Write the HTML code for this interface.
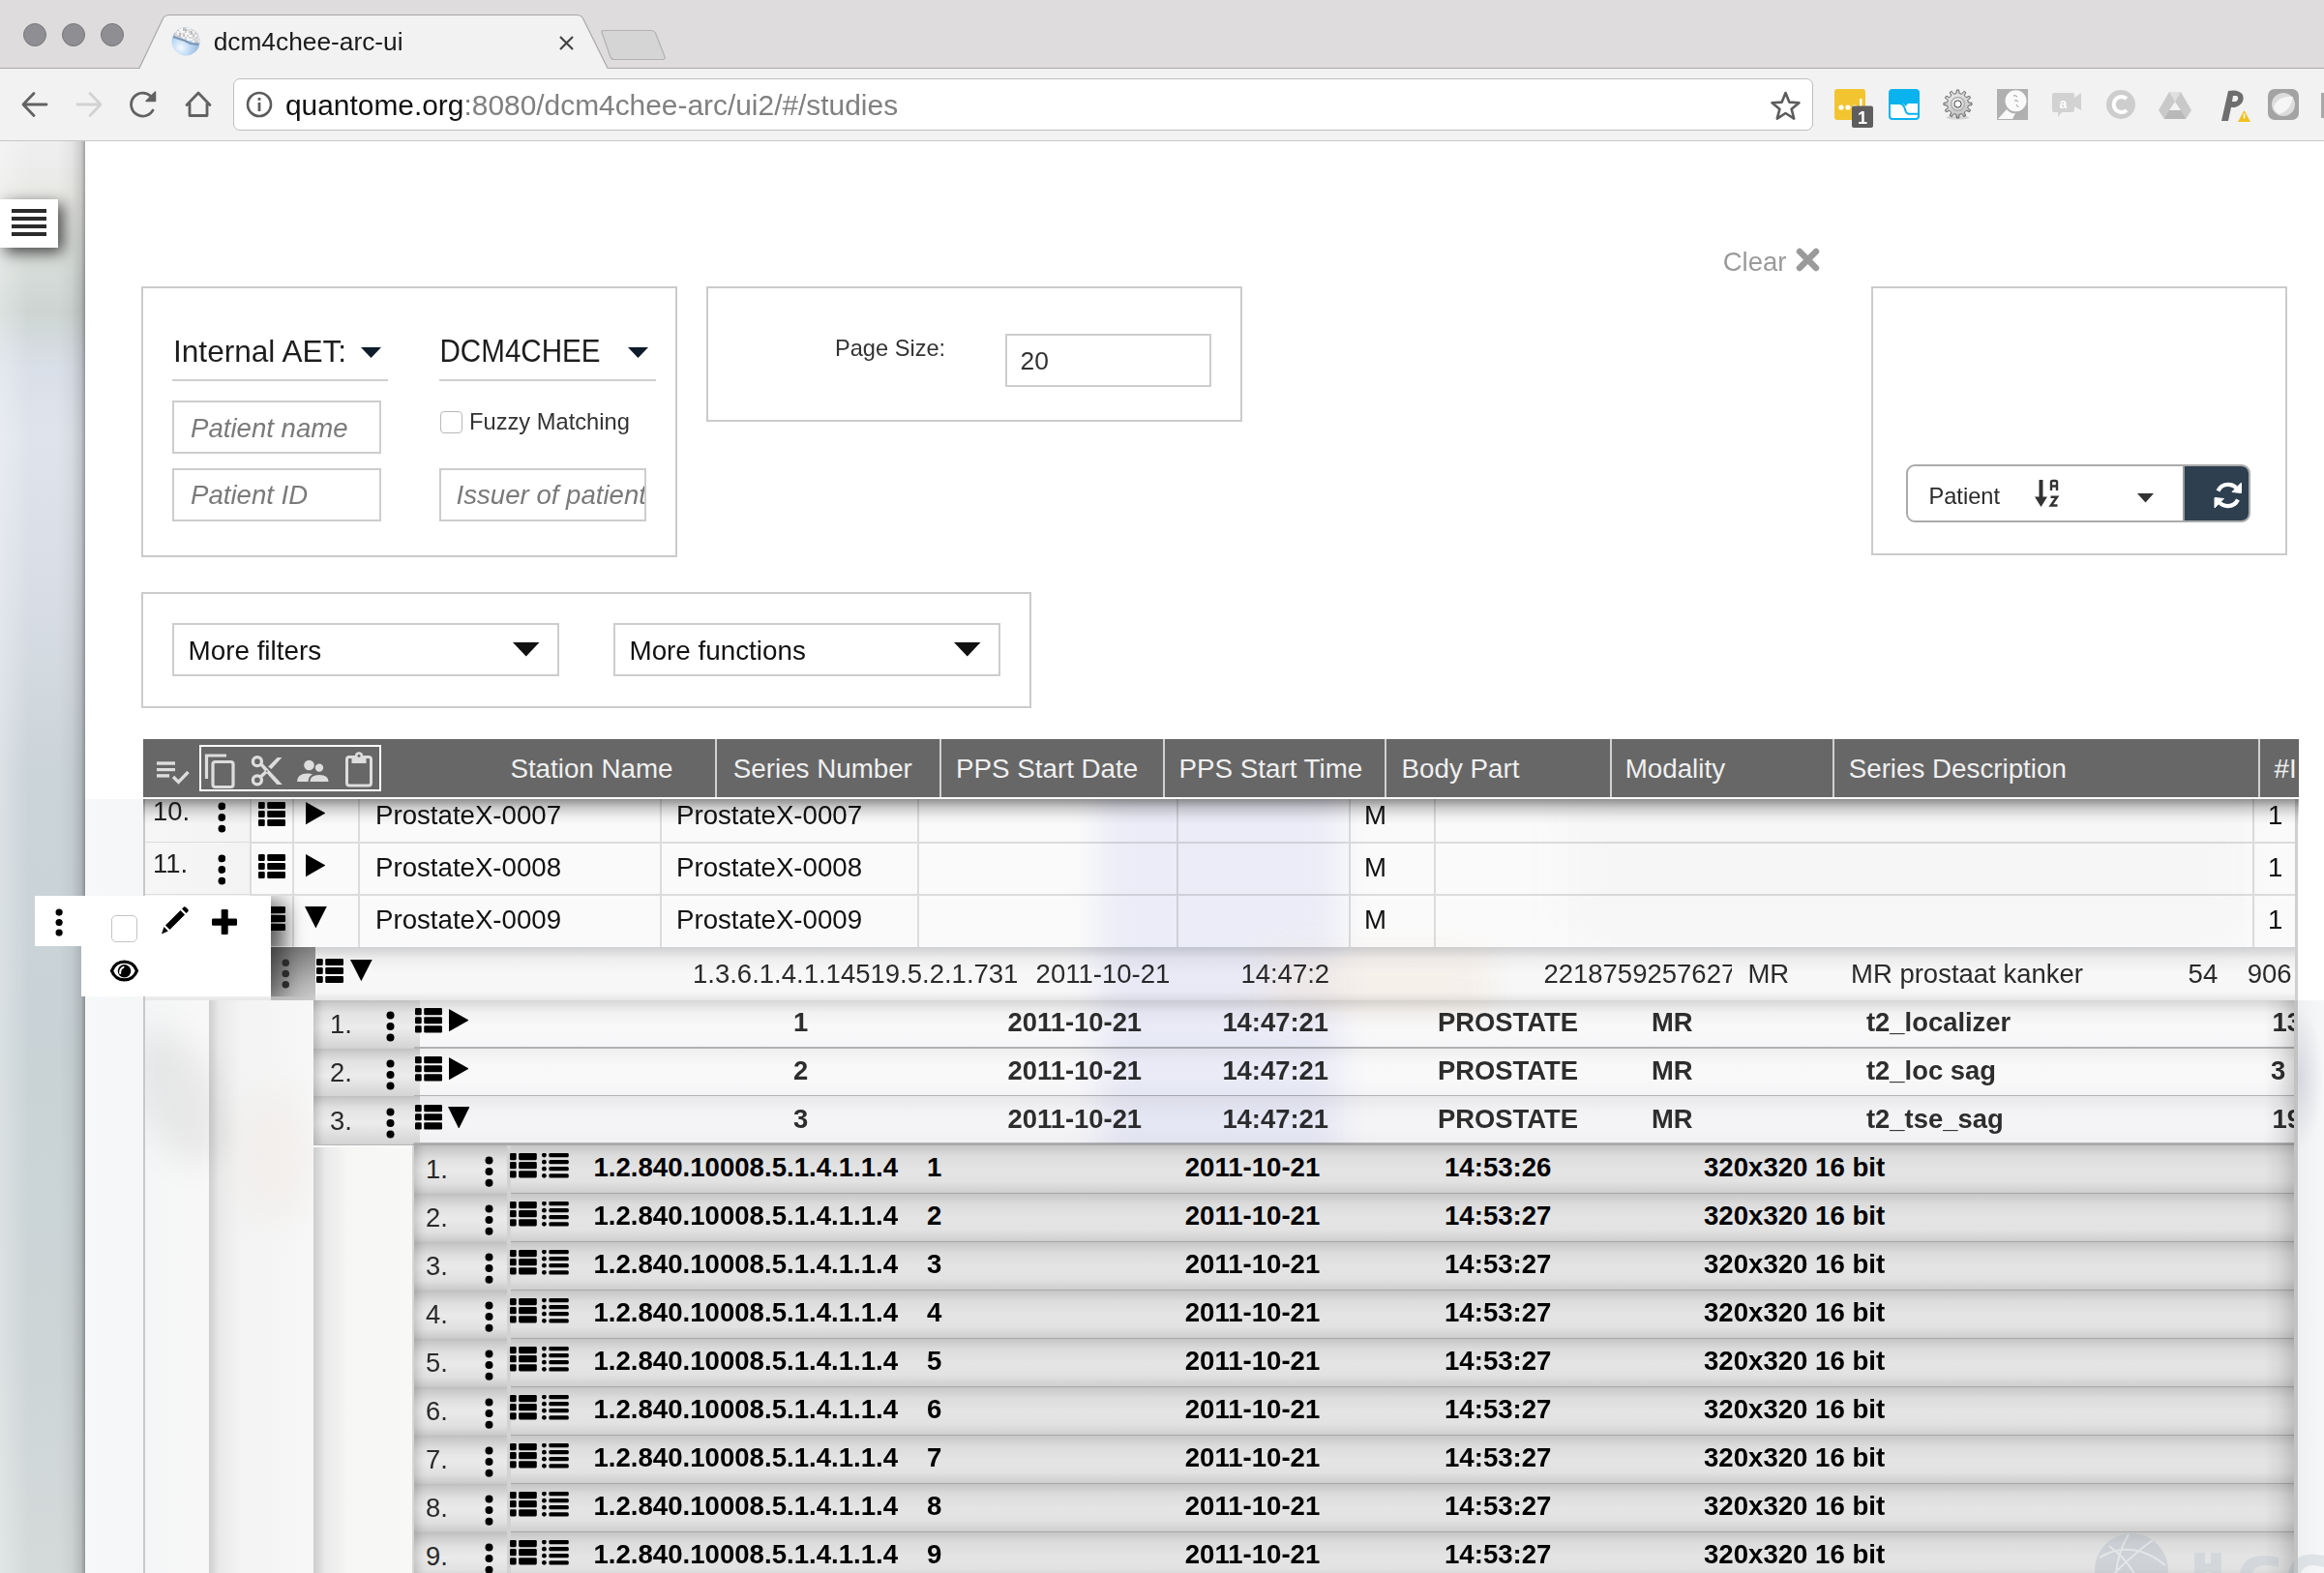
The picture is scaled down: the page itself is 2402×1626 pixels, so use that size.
<!DOCTYPE html>
<html><head><meta charset="utf-8"><title>dcm4chee-arc-ui</title>
<style>
html,body{margin:0;padding:0;width:2402px;height:1626px;overflow:hidden;background:#fff;font-family:"Liberation Sans", sans-serif;position:relative}
.t{position:absolute;white-space:pre;font-family:"Liberation Sans", sans-serif}
svg{display:block}
</style></head><body>
<div style="position:absolute;left:0px;top:0px;width:2402px;height:71px;background:#dedcdc"></div>
<div style="position:absolute;left:0px;top:70px;width:2402px;height:1px;background:#a9a9a9"></div>
<svg style="position:absolute;left:0px;top:0px;" width="700" height="72" viewBox="0 0 700 72"><path d="M143.5,71.5 L168.5,19 Q170.5,15.5 175,15.5 L596,15.5 Q600.5,15.5 602.5,19 L628.5,71.5" fill="#f2f2f2" stroke="#a9a9a9" stroke-width="1.2"/><path d="M622,33.5 Q621,31.5 624,31.5 L673,31.5 Q676,31.5 677.5,34 L687,58.5 Q688,61.5 685,61.5 L635,61.5 Q632,61.5 631,59 Z" fill="#d5d5d5" stroke="#b2b2b2" stroke-width="1.2"/></svg>
<svg style="position:absolute;left:0px;top:0px;" width="140" height="71" viewBox="0 0 140 71"><circle cx="36" cy="36" r="11.5" fill="#8f8e93" stroke="#77767a" stroke-width="1"/><circle cx="76" cy="36" r="11.5" fill="#8f8e93" stroke="#77767a" stroke-width="1"/><circle cx="116" cy="36" r="11.5" fill="#8f8e93" stroke="#77767a" stroke-width="1"/></svg>
<svg style="position:absolute;left:177px;top:28px;" width="30" height="30" viewBox="0 0 30 30"><defs><radialGradient id="fg" cx="0.33" cy="0.7" r="0.75"><stop offset="0" stop-color="#f4f9ff"/><stop offset="0.45" stop-color="#bcd8f4"/><stop offset="1" stop-color="#86a8cc"/></radialGradient><clipPath id="fc"><circle cx="15" cy="15" r="14.5"/></clipPath></defs><g clip-path="url(#fc)"><rect x="0" y="0" width="30" height="30" fill="url(#fg)"/><rect x="0" y="0" width="2" height="2" fill="#e2e2e2"/><rect x="2" y="0" width="2" height="2" fill="#f8f8f8"/><rect x="4" y="0" width="2" height="2" fill="#f8f8f8"/><rect x="6" y="0" width="2" height="2" fill="#e2e2e2"/><rect x="8" y="0" width="2" height="2" fill="#cfcfcf"/><rect x="10" y="0" width="2" height="2" fill="#f8f8f8"/><rect x="12" y="0" width="2" height="2" fill="#bdbdbd"/><rect x="14" y="0" width="2" height="2" fill="#d8d8d8"/><rect x="16" y="0" width="2" height="2" fill="#f8f8f8"/><rect x="18" y="0" width="2" height="2" fill="#f4f4f4"/><rect x="20" y="0" width="2" height="2" fill="#f8f8f8"/><rect x="22" y="0" width="2" height="2" fill="#f4f4f4"/><rect x="24" y="0" width="2" height="2" fill="#bdbdbd"/><rect x="26" y="0" width="2" height="2" fill="#cfcfcf"/><rect x="28" y="0" width="2" height="2" fill="#f8f8f8"/><rect x="0" y="2" width="2" height="2" fill="#e2e2e2"/><rect x="2" y="2" width="2" height="2" fill="#e2e2e2"/><rect x="4" y="2" width="2" height="2" fill="#d8d8d8"/><rect x="6" y="2" width="2" height="2" fill="#bdbdbd"/><rect x="8" y="2" width="2" height="2" fill="#f8f8f8"/><rect x="10" y="2" width="2" height="2" fill="#f8f8f8"/><rect x="12" y="2" width="2" height="2" fill="#bdbdbd"/><rect x="14" y="2" width="2" height="2" fill="#bdbdbd"/><rect x="16" y="2" width="2" height="2" fill="#d8d8d8"/><rect x="18" y="2" width="2" height="2" fill="#e2e2e2"/><rect x="20" y="2" width="2" height="2" fill="#e2e2e2"/><rect x="22" y="2" width="2" height="2" fill="#d8d8d8"/><rect x="24" y="2" width="2" height="2" fill="#e2e2e2"/><rect x="26" y="2" width="2" height="2" fill="#f8f8f8"/><rect x="28" y="2" width="2" height="2" fill="#bdbdbd"/><rect x="0" y="4" width="2" height="2" fill="#d8d8d8"/><rect x="2" y="4" width="2" height="2" fill="#f4f4f4"/><rect x="4" y="4" width="2" height="2" fill="#d8d8d8"/><rect x="6" y="4" width="2" height="2" fill="#f4f4f4"/><rect x="8" y="4" width="2" height="2" fill="#e2e2e2"/><rect x="10" y="4" width="2" height="2" fill="#f8f8f8"/><rect x="12" y="4" width="2" height="2" fill="#f4f4f4"/><rect x="14" y="4" width="2" height="2" fill="#cfcfcf"/><rect x="16" y="4" width="2" height="2" fill="#f4f4f4"/><rect x="18" y="4" width="2" height="2" fill="#cfcfcf"/><rect x="20" y="4" width="2" height="2" fill="#bdbdbd"/><rect x="22" y="4" width="2" height="2" fill="#f8f8f8"/><rect x="24" y="4" width="2" height="2" fill="#d8d8d8"/><rect x="26" y="4" width="2" height="2" fill="#bdbdbd"/><rect x="28" y="4" width="2" height="2" fill="#d8d8d8"/><rect x="0" y="6" width="2" height="2" fill="#bdbdbd"/><rect x="2" y="6" width="2" height="2" fill="#bdbdbd"/><rect x="4" y="6" width="2" height="2" fill="#d8d8d8"/><rect x="6" y="6" width="2" height="2" fill="#f8f8f8"/><rect x="8" y="6" width="2" height="2" fill="#bdbdbd"/><rect x="10" y="6" width="2" height="2" fill="#e2e2e2"/><rect x="12" y="6" width="2" height="2" fill="#cfcfcf"/><rect x="14" y="6" width="2" height="2" fill="#f4f4f4"/><rect x="16" y="6" width="2" height="2" fill="#f4f4f4"/><rect x="18" y="6" width="2" height="2" fill="#e2e2e2"/><rect x="20" y="6" width="2" height="2" fill="#bdbdbd"/><rect x="22" y="6" width="2" height="2" fill="#e2e2e2"/><rect x="24" y="6" width="2" height="2" fill="#cfcfcf"/><rect x="26" y="6" width="2" height="2" fill="#d8d8d8"/><rect x="28" y="6" width="2" height="2" fill="#bdbdbd"/><rect x="4" y="8" width="2" height="2" fill="#d8d8d8"/><rect x="6" y="8" width="2" height="2" fill="#cfcfcf"/><rect x="8" y="8" width="2" height="2" fill="#bdbdbd"/><rect x="10" y="8" width="2" height="2" fill="#f8f8f8"/><rect x="12" y="8" width="2" height="2" fill="#bdbdbd"/><rect x="14" y="8" width="2" height="2" fill="#f8f8f8"/><rect x="16" y="8" width="2" height="2" fill="#cfcfcf"/><rect x="18" y="8" width="2" height="2" fill="#f8f8f8"/><rect x="20" y="8" width="2" height="2" fill="#f8f8f8"/><rect x="22" y="8" width="2" height="2" fill="#bdbdbd"/><rect x="24" y="8" width="2" height="2" fill="#f8f8f8"/><rect x="26" y="8" width="2" height="2" fill="#e2e2e2"/><rect x="28" y="8" width="2" height="2" fill="#cfcfcf"/><rect x="10" y="10" width="2" height="2" fill="#d8d8d8"/><rect x="12" y="10" width="2" height="2" fill="#f4f4f4"/><rect x="14" y="10" width="2" height="2" fill="#cfcfcf"/><rect x="16" y="10" width="2" height="2" fill="#f8f8f8"/><rect x="18" y="10" width="2" height="2" fill="#d8d8d8"/><rect x="20" y="10" width="2" height="2" fill="#d8d8d8"/><rect x="22" y="10" width="2" height="2" fill="#e2e2e2"/><rect x="24" y="10" width="2" height="2" fill="#d8d8d8"/><rect x="26" y="10" width="2" height="2" fill="#cfcfcf"/><rect x="28" y="10" width="2" height="2" fill="#f8f8f8"/><rect x="16" y="12" width="2" height="2" fill="#f8f8f8"/><rect x="18" y="12" width="2" height="2" fill="#f8f8f8"/><rect x="20" y="12" width="2" height="2" fill="#f4f4f4"/><rect x="22" y="12" width="2" height="2" fill="#d8d8d8"/><rect x="24" y="12" width="2" height="2" fill="#d8d8d8"/><rect x="26" y="12" width="2" height="2" fill="#e2e2e2"/><rect x="28" y="12" width="2" height="2" fill="#d8d8d8"/><rect x="22" y="14" width="2" height="2" fill="#f8f8f8"/><rect x="24" y="14" width="2" height="2" fill="#cfcfcf"/><rect x="26" y="14" width="2" height="2" fill="#cfcfcf"/><rect x="28" y="14" width="2" height="2" fill="#f4f4f4"/><path d="M2,10 L8,12 L14,14 L20,17 L28,18" fill="none" stroke="#7d95b0" stroke-width="2"/></g></svg>
<div class="t" style="left:220.7px;top:30.0px;font-size:26.3px;line-height:26.3px;color:#1a1a1a;font-weight:400;font-style:normal;">dcm4chee-arc-ui</div>
<svg style="position:absolute;left:576px;top:36px;" width="20" height="18" viewBox="0 0 20 18"><path d="M3,2 L16,15 M16,2 L3,15" stroke="#444" stroke-width="2.2"/></svg>
<div style="position:absolute;left:0px;top:71px;width:2402px;height:74px;background:#f2f2f2"></div>
<div style="position:absolute;left:0px;top:145px;width:2402px;height:1px;background:#c6c6c6"></div>
<svg style="position:absolute;left:20px;top:91px;" width="34" height="32" viewBox="0 0 34 32"><path d="M28,17 L5,17 M15,5.5 L4,17 L15,28.5" fill="none" stroke="#626262" stroke-width="2.8" stroke-linecap="round" stroke-linejoin="round"/></svg>
<svg style="position:absolute;left:76px;top:91px;" width="34" height="32" viewBox="0 0 34 32"><path d="M4,17 L27,17 M17,5.5 L28,17 L17,28.5" fill="none" stroke="#d2d2d2" stroke-width="2.8" stroke-linecap="round" stroke-linejoin="round"/></svg>
<svg style="position:absolute;left:132px;top:91px;" width="36" height="34" viewBox="0 0 36 34"><path d="M26.5,22 A12,12 0 1 1 24,8.5" fill="none" stroke="#626262" stroke-width="2.8"/><path d="M19,13.5 L28.5,4 L28.5,13.5 Z" fill="#626262" stroke="#626262" stroke-width="1.5" stroke-linejoin="round"/></svg>
<svg style="position:absolute;left:188px;top:91px;" width="34" height="32" viewBox="0 0 34 32"><path d="M5,17.5 L17,5 L29,17.5 M8,16 L8,28.5 L26,28.5 L26,16" fill="none" stroke="#626262" stroke-width="2.8" stroke-linejoin="round" stroke-linecap="round"/></svg>
<div style="position:absolute;left:241px;top:81px;width:1633px;height:54px;background:#fff;border:1px solid #bdbdbd;border-radius:7px;box-sizing:border-box"></div>
<svg style="position:absolute;left:252px;top:92px;" width="32" height="32" viewBox="0 0 32 32"><circle cx="16" cy="16" r="12" fill="none" stroke="#5c5c5c" stroke-width="2.6"/><rect x="14.6" y="14" width="2.8" height="9" fill="#5c5c5c"/><rect x="14.6" y="9" width="2.8" height="2.8" fill="#5c5c5c"/></svg>
<div class="t" style="left:295.0px;top:93.7px;font-size:29.9px;line-height:29.9px;color:#222;font-weight:400;font-style:normal;"><span style="color:#111">quantome.org</span><span style="color:#808080">:8080/dcm4chee-arc/ui2/#/studies</span></div>
<svg style="position:absolute;left:1828px;top:92px;" width="36" height="34" viewBox="0 0 36 34"><path d="M17.5,4 L21.3,13.6 L31.5,14.2 L23.6,20.7 L26.2,30.6 L17.5,25 L8.8,30.6 L11.4,20.7 L3.5,14.2 L13.7,13.6 Z" fill="none" stroke="#5c5c5c" stroke-width="2.6" stroke-linejoin="round"/></svg>
<svg style="position:absolute;left:1894px;top:90px;" width="46" height="44" viewBox="0 0 46 44"><rect x="2" y="2" width="32" height="32" rx="3" fill="#f2c530"/><circle cx="9" cy="21" r="2.6" fill="#fff"/><circle cx="16" cy="21" r="2.6" fill="#fff"/><circle cx="23" cy="21" r="2.6" fill="#fff"/><rect x="28" y="12" width="2.5" height="10" fill="#fff"/><rect x="20" y="19.5" width="22" height="22.5" rx="2" fill="#5e5e5e"/><text x="31" y="38" font-family="Liberation Sans" font-weight="700" font-size="18" fill="#fff" text-anchor="middle">1</text></svg>
<svg style="position:absolute;left:1952px;top:92px;" width="32" height="32" viewBox="0 0 32 32"><rect x="1" y="1" width="30" height="30" rx="3" fill="#fff" stroke="#0ab2ee" stroke-width="2"/><path d="M1,4 Q1,1 4,1 L28,1 Q31,1 31,4 L31,15 L1,15 Z" fill="#0ab2ee"/><path d="M1,15 L11,15 Q15,15 16.5,19.5 L17.8,23.3 Q18.8,25.8 22,25.8 L31,25.8" fill="none" stroke="#0ab2ee" stroke-width="2"/><path d="M15,15 L20,15 Q18,17 18,18 Z" fill="#0ab2ee"/></svg>
<svg style="position:absolute;left:2008px;top:92px;" width="31" height="32" viewBox="0 0 31 32"><defs><radialGradient id="gg" cx="0.45" cy="0.35" r="0.7"><stop offset="0" stop-color="#f2f2f2"/><stop offset="0.7" stop-color="#c9c9c9"/><stop offset="1" stop-color="#9d9d9d"/></radialGradient></defs><ellipse cx="15.5" cy="29.5" rx="12" ry="2" fill="rgba(0,0,0,0.12)"/><path d="M13.86,4.62 L14.39,0.94 L16.61,0.94 L17.14,4.62 L19.52,5.26 L21.82,2.34 L23.74,3.45 L22.36,6.90 L24.10,8.64 L27.55,7.26 L28.66,9.18 L25.74,11.48 L26.38,13.86 L30.06,14.39 L30.06,16.61 L26.38,17.14 L25.74,19.52 L28.66,21.82 L27.55,23.74 L24.10,22.36 L22.36,24.10 L23.74,27.55 L21.82,28.66 L19.52,25.74 L17.14,26.38 L16.61,30.06 L14.39,30.06 L13.86,26.38 L11.48,25.74 L9.18,28.66 L7.26,27.55 L8.64,24.10 L6.90,22.36 L3.45,23.74 L2.34,21.82 L5.26,19.52 L4.62,17.14 L0.94,16.61 L0.94,14.39 L4.62,13.86 L5.26,11.48 L2.34,9.18 L3.45,7.26 L6.90,8.64 L8.64,6.90 L7.26,3.45 L9.18,2.34 L11.48,5.26 Z" fill="url(#gg)" stroke="#5a5a5a" stroke-width="0.9" stroke-linejoin="round"/><circle cx="15.5" cy="15.5" r="7" fill="none" stroke="#b0b0b0" stroke-width="1.5"/><circle cx="15.5" cy="15.5" r="3.6" fill="#fff" stroke="#444" stroke-width="1"/></svg>
<svg style="position:absolute;left:2064px;top:92px;" width="32" height="32" viewBox="0 0 32 32"><rect x="0" y="0" width="32" height="32" fill="#b0b0b0"/><circle cx="19.5" cy="12.2" r="11" fill="#fafafa"/><path d="M1,31 L10,21 Q14,26 19,25 L16,31 Z" fill="#fafafa"/><path d="M17,7 Q19,6 21,8 M18,12 Q20,11 22,13 M20,16 L22,19" stroke="#999" stroke-width="1" fill="none"/></svg>
<svg style="position:absolute;left:2118px;top:92px;" width="36" height="34" viewBox="0 0 36 34"><path d="M3,6 Q3,4 5,4 L24,4 Q26,4 26,6 L26,22 Q26,24 24,24 L13,24 L9,29 L9,24 L5,24 Q3,24 3,22 Z" fill="#d2d2d2"/><path d="M26,9 L33,4 L33,22 L26,18 Z" fill="#d2d2d2"/><text x="14.5" y="20" font-family="Liberation Sans" font-weight="700" font-size="14" fill="#fff" text-anchor="middle">a</text></svg>
<svg style="position:absolute;left:2175px;top:90px;" width="34" height="36" viewBox="0 0 34 36"><circle cx="17" cy="18" r="15" fill="#cdcdcd"/><path d="M23,12 A8,8 0 1 0 23,24" fill="none" stroke="#fff" stroke-width="4"/></svg>
<svg style="position:absolute;left:2230px;top:93px;" width="36" height="32" viewBox="0 0 36 32"><path d="M12,2 L24,2 L35,21 L29,30 L7,30 L1,21 Z" fill="#c9c9c9"/><path d="M12,2 L24,2 L18,12 Z" fill="#e0e0e0"/><path d="M18,12 L12,21 L24,21 Z" fill="#f2f2f2"/><path d="M7,30 L12,21 L24,21 L29,30 Z" fill="#b8b8b8"/></svg>
<svg style="position:absolute;left:2290px;top:90px;" width="36" height="38" viewBox="0 0 36 38"><path d="M6,35 L13,4 Q24,2 28,8 Q31,17 20,21 L16,21 L13,35 Z" fill="#6e6e6e"/><path d="M18,9 L22,9 Q25,12 21,15 L17,15 Z" fill="#f2f2f2"/><path d="M23,36 L29.5,24 L36,36 Z" fill="#f0c020"/><rect x="28.8" y="27.5" width="1.5" height="5" fill="#fff"/></svg>
<svg style="position:absolute;left:2342px;top:90px;" width="36" height="36" viewBox="0 0 36 36"><rect x="2" y="2" width="32" height="32" rx="7" fill="#a3a3a3"/><circle cx="18" cy="18" r="12" fill="#dcdcdc"/><path d="M8,20 Q14,8 28,10 Q26,24 14,28 Q9,26 8,20Z" fill="#f5f5f5"/></svg>
<svg style="position:absolute;left:2398px;top:90px;" width="6" height="36" viewBox="0 0 6 36"><rect x="1" y="6" width="5" height="26" fill="#a8a8a8"/></svg>
<div style="position:absolute;left:0px;top:146px;width:88px;height:1480px;background:linear-gradient(180deg,#efeff1 0%,#e9e9e6 3.6%,#d8ddda 8.4%,#cdd5d2 11.8%,#d9dfe8 15.8%,#dfe4ec 20.5%,#d9dee6 30.7%,#cbd4d9 44%,#c9d3d6 64%,#cdd5d6 85%,#d4dada 100%)"></div>
<div style="position:absolute;left:0px;top:146px;width:30px;height:1480px;background:linear-gradient(90deg,rgba(255,255,255,0.3),rgba(255,255,255,0))"></div>
<div style="position:absolute;left:60px;top:146px;width:28px;height:1480px;background:linear-gradient(90deg,rgba(0,0,0,0) 0%,rgba(0,0,0,0.04) 50%,rgba(0,0,0,0.14) 85%,rgba(0,0,0,0.32) 100%)"></div>
<div style="position:absolute;left:0px;top:206px;width:60px;height:50px;background:#fff;box-shadow:5px 5px 15px rgba(0,0,0,0.7)"></div>
<div style="position:absolute;left:12px;top:216px;width:36px;height:4px;background:#2b2b2b"></div>
<div style="position:absolute;left:12px;top:224px;width:36px;height:4px;background:#2b2b2b"></div>
<div style="position:absolute;left:12px;top:232px;width:36px;height:4px;background:#2b2b2b"></div>
<div style="position:absolute;left:12px;top:240px;width:36px;height:4px;background:#2b2b2b"></div>
<div style="position:absolute;left:146px;top:296px;width:554px;height:280px;border:2px solid #cbcbcb;box-sizing:border-box"></div>
<div style="position:absolute;left:730px;top:296px;width:554px;height:140px;border:2px solid #cbcbcb;box-sizing:border-box"></div>
<div style="position:absolute;left:1934px;top:296px;width:430px;height:278px;border:2px solid #cbcbcb;box-sizing:border-box"></div>
<div style="position:absolute;left:146px;top:612px;width:920px;height:120px;border:2px solid #cbcbcb;box-sizing:border-box"></div>
<div class="t" style="left:179.0px;top:347.8px;font-size:31.6px;line-height:31.6px;color:#1d1d1d;font-weight:400;font-style:normal;">Internal AET:</div>
<svg style="position:absolute;left:373px;top:359px;" width="22" height="12" viewBox="0 0 22 12"><path d="M0,0 L21,0 L10.5,11 Z" fill="#0d1b2a"/></svg>
<div style="position:absolute;left:178px;top:392px;width:223px;height:2px;background:#cfcfcf"></div>
<div class="t" style="left:454.5px;top:349.4px;font-size:29.6px;line-height:29.6px;color:#1d1d1d;font-weight:400;font-style:normal;transform:scaleY(1.1);transform-origin:0 84.6%">DCM4CHEE</div>
<svg style="position:absolute;left:649px;top:359px;" width="22" height="12" viewBox="0 0 22 12"><path d="M0,0 L21,0 L10.5,11 Z" fill="#0d1b2a"/></svg>
<div style="position:absolute;left:454px;top:392px;width:224px;height:2px;background:#cfcfcf"></div>
<div style="position:absolute;left:178px;top:414px;width:216px;height:55px;border:2px solid #cdcdcd;box-sizing:border-box"></div>
<div class="t" style="left:197.0px;top:428.6px;font-size:27.6px;line-height:27.6px;color:#7a7a7a;font-weight:400;font-style:italic;">Patient name</div>
<div style="position:absolute;left:178px;top:484px;width:216px;height:55px;border:2px solid #cdcdcd;box-sizing:border-box"></div>
<div class="t" style="left:197.0px;top:498.1px;font-size:27.6px;line-height:27.6px;color:#7a7a7a;font-weight:400;font-style:italic;">Patient ID</div>
<div style="position:absolute;left:454.5px;top:424.5px;width:23px;height:23px;border:1.5px solid #b9b9b9;border-radius:4px;box-sizing:border-box;background:#fff"></div>
<div class="t" style="left:485.0px;top:425.4px;font-size:23.7px;line-height:23.7px;color:#333;font-weight:400;font-style:normal;">Fuzzy Matching</div>
<div style="position:absolute;left:454px;top:484px;width:214px;height:55px;border:2px solid #cdcdcd;box-sizing:border-box;overflow:hidden"></div>
<div style="position:absolute;left:456px;top:486px;width:210px;height:51px;overflow:hidden">
<div class="t" style="left:15.6px;top:12.1px;font-size:27.6px;line-height:27.6px;color:#7a7a7a;font-weight:400;font-style:italic;">Issuer of patient ID</div>
</div>
<div class="t" style="left:863.0px;top:349.0px;font-size:23.6px;line-height:23.6px;color:#333;font-weight:400;font-style:normal;">Page Size:</div>
<div style="position:absolute;left:1039px;top:344.5px;width:213px;height:55px;border:2px solid #cdcdcd;box-sizing:border-box"></div>
<div class="t" style="left:1054.5px;top:359.7px;font-size:26.4px;line-height:26.4px;color:#333;font-weight:400;font-style:normal;">20</div>
<div class="t" style="left:1780.7px;top:257.4px;font-size:27.5px;line-height:27.5px;color:#9a9a9a;font-weight:400;font-style:normal;">Clear</div>
<svg style="position:absolute;left:1856px;top:256px;" width="26" height="25" viewBox="0 0 26 25"><path d="M4,4 L21,21 M21,4 L4,21" stroke="#9a9a9a" stroke-width="6.5" stroke-linecap="round"/></svg>
<div style="position:absolute;left:1970px;top:480px;width:356px;height:60px;border:2px solid #ababab;border-radius:9px;box-sizing:border-box;background:#fff"></div>
<div style="position:absolute;left:2256px;top:482px;width:68px;height:56px;background:#2e3f4f;border-radius:0 7px 7px 0;border-left:2px solid #9a9a9a;box-sizing:border-box"></div>
<div class="t" style="left:1993.5px;top:502.0px;font-size:23.6px;line-height:23.6px;color:#2a2a2a;font-weight:400;font-style:normal;">Patient</div>
<svg style="position:absolute;left:2100px;top:494px;" width="30" height="32" viewBox="0 0 30 32"><path d="M9.5,2 L9.5,23" stroke="#333" stroke-width="4"/><path d="M3,19.5 L16,19.5 L9.5,30 Z" fill="#333"/><path d="M20,13 L20,4.5 Q20,3 21.5,3 L24.5,3 Q26,3 26,4.5 L26,13 M20,8.5 L26,8.5" fill="none" stroke="#333" stroke-width="2.4"/><path d="M19.5,19.8 L26,19.8 L19.8,28.5 L26.5,28.5" fill="none" stroke="#333" stroke-width="2.5"/></svg>
<svg style="position:absolute;left:2209px;top:509.5px;" width="18" height="11" viewBox="0 0 18 11"><path d="M0,0 L17,0 L8.5,9.5 Z" fill="#333"/></svg>
<svg style="position:absolute;left:2286px;top:495px;" width="34" height="34" viewBox="0 0 34 34"><path d="M27.5,13 A11.5,11.5 0 0 0 6.5,12.5" fill="none" stroke="#fff" stroke-width="4.2"/><path d="M21,13.5 L30.5,4 L30.5,14.5 Z" fill="#fff" stroke="#fff" stroke-width="1"/><path d="M6,21 A11.5,11.5 0 0 0 27,21.5" fill="none" stroke="#fff" stroke-width="4.2"/><path d="M12.5,20.5 L3,30 L3,19.5 Z" fill="#fff" stroke="#fff" stroke-width="1"/></svg>
<div style="position:absolute;left:178px;top:644px;width:400px;height:55px;border:2px solid #cdcdcd;box-sizing:border-box"></div>
<div class="t" style="left:194.6px;top:658.5px;font-size:27.8px;line-height:27.8px;color:#111;font-weight:400;font-style:normal;">More filters</div>
<svg style="position:absolute;left:530px;top:664px;" width="28" height="15" viewBox="0 0 28 15"><path d="M0,0 L27.5,0 L13.75,14.5 Z" fill="#111"/></svg>
<div style="position:absolute;left:634px;top:644px;width:400px;height:55px;border:2px solid #cdcdcd;box-sizing:border-box"></div>
<div class="t" style="left:650.5px;top:658.5px;font-size:27.8px;line-height:27.8px;color:#111;font-weight:400;font-style:normal;">More functions</div>
<svg style="position:absolute;left:986px;top:664px;" width="28" height="15" viewBox="0 0 28 15"><path d="M0,0 L27.5,0 L13.75,14.5 Z" fill="#111"/></svg>
<div style="position:absolute;left:88px;top:826px;width:60px;height:800px;background:linear-gradient(90deg,#f7f8f9,#f5f6f7)"></div>
<div style="position:absolute;left:148px;top:826px;width:2228px;height:800px;background:#fafafa"></div>
<div style="position:absolute;left:2375px;top:1034px;width:27px;height:592px;background:linear-gradient(90deg,#eff0f1,#f6f7f8)"></div>
<div style="position:absolute;left:2372px;top:826px;width:3px;height:208px;background:#cfcfcf"></div>
<div style="position:absolute;left:148px;top:826px;width:2px;height:800px;background:#c8c8c8"></div>
<div style="position:absolute;left:150px;top:826px;width:110px;height:45px;background:linear-gradient(90deg,#f6f6f6,#f3f3f3)"></div>
<div style="position:absolute;left:150px;top:870px;width:2222px;height:2px;background:#dcdcdc"></div>
<div style="position:absolute;left:258px;top:826px;width:2px;height:45px;background:#dcdcdc"></div>
<div style="position:absolute;left:302px;top:826px;width:2px;height:45px;background:#dcdcdc"></div>
<div style="position:absolute;left:370px;top:826px;width:2px;height:45px;background:#dcdcdc"></div>
<div style="position:absolute;left:682px;top:826px;width:2px;height:45px;background:#dcdcdc"></div>
<div style="position:absolute;left:948px;top:826px;width:2px;height:45px;background:#dcdcdc"></div>
<div style="position:absolute;left:1216px;top:826px;width:2px;height:45px;background:#dcdcdc"></div>
<div style="position:absolute;left:1394px;top:826px;width:2px;height:45px;background:#dcdcdc"></div>
<div style="position:absolute;left:1482px;top:826px;width:2px;height:45px;background:#dcdcdc"></div>
<div style="position:absolute;left:2328px;top:826px;width:2px;height:45px;background:#dcdcdc"></div>
<div class="t" style="left:158.0px;top:824.8px;font-size:27.4px;line-height:27.4px;color:#222;font-weight:400;font-style:normal;">10.</div>
<svg style="position:absolute;left:224.6px;top:828.9px;" width="8.8" height="32.0" viewBox="0 0 8.8 32.0"><circle cx="4.4" cy="4.4" r="3.9" fill="#000"/><circle cx="4.4" cy="16.0" r="3.9" fill="#000"/><circle cx="4.4" cy="27.6" r="3.9" fill="#000"/></svg>
<svg style="position:absolute;left:267.4px;top:828.6px;" width="28" height="25" viewBox="0 0 28 25"><rect x="0" y="0.00" width="6.72" height="7.03" rx="1.3" fill="#000"/><rect x="9.24" y="0.00" width="18.76" height="7.03" rx="1.3" fill="#000"/><rect x="0" y="8.98" width="6.72" height="7.03" rx="1.3" fill="#000"/><rect x="9.24" y="8.98" width="18.76" height="7.03" rx="1.3" fill="#000"/><rect x="0" y="17.97" width="6.72" height="7.03" rx="1.3" fill="#000"/><rect x="9.24" y="17.97" width="18.76" height="7.03" rx="1.3" fill="#000"/></svg>
<svg style="position:absolute;left:316px;top:829.4px;" width="20.4" height="23.2" viewBox="0 0 20.4 23.2"><path d="M0,0 L20.4,11.6 L0,23.2 Z" fill="#000"/></svg>
<div class="t" style="left:388.0px;top:828.6px;font-size:27.65px;line-height:27.65px;color:#111;font-weight:400;font-style:normal;">ProstateX-0007</div>
<div class="t" style="left:699.0px;top:828.6px;font-size:27.65px;line-height:27.65px;color:#111;font-weight:400;font-style:normal;">ProstateX-0007</div>
<div class="t" style="left:1410.0px;top:828.6px;font-size:27.65px;line-height:27.65px;color:#111;font-weight:400;font-style:normal;">M</div>
<div class="t" style="left:2344.0px;top:828.6px;font-size:27.65px;line-height:27.65px;color:#111;font-weight:400;font-style:normal;">1</div>
<div style="position:absolute;left:150px;top:871px;width:110px;height:54px;background:linear-gradient(90deg,#f6f6f6,#f3f3f3)"></div>
<div style="position:absolute;left:150px;top:924px;width:2222px;height:2px;background:#dcdcdc"></div>
<div style="position:absolute;left:258px;top:871px;width:2px;height:54px;background:#dcdcdc"></div>
<div style="position:absolute;left:302px;top:871px;width:2px;height:54px;background:#dcdcdc"></div>
<div style="position:absolute;left:370px;top:871px;width:2px;height:54px;background:#dcdcdc"></div>
<div style="position:absolute;left:682px;top:871px;width:2px;height:54px;background:#dcdcdc"></div>
<div style="position:absolute;left:948px;top:871px;width:2px;height:54px;background:#dcdcdc"></div>
<div style="position:absolute;left:1216px;top:871px;width:2px;height:54px;background:#dcdcdc"></div>
<div style="position:absolute;left:1394px;top:871px;width:2px;height:54px;background:#dcdcdc"></div>
<div style="position:absolute;left:1482px;top:871px;width:2px;height:54px;background:#dcdcdc"></div>
<div style="position:absolute;left:2328px;top:871px;width:2px;height:54px;background:#dcdcdc"></div>
<div class="t" style="left:158.0px;top:878.8px;font-size:27.4px;line-height:27.4px;color:#222;font-weight:400;font-style:normal;">11.</div>
<svg style="position:absolute;left:224.6px;top:882.9px;" width="8.8" height="32.0" viewBox="0 0 8.8 32.0"><circle cx="4.4" cy="4.4" r="3.9" fill="#000"/><circle cx="4.4" cy="16.0" r="3.9" fill="#000"/><circle cx="4.4" cy="27.6" r="3.9" fill="#000"/></svg>
<svg style="position:absolute;left:267.4px;top:882.6px;" width="28" height="25" viewBox="0 0 28 25"><rect x="0" y="0.00" width="6.72" height="7.03" rx="1.3" fill="#000"/><rect x="9.24" y="0.00" width="18.76" height="7.03" rx="1.3" fill="#000"/><rect x="0" y="8.98" width="6.72" height="7.03" rx="1.3" fill="#000"/><rect x="9.24" y="8.98" width="18.76" height="7.03" rx="1.3" fill="#000"/><rect x="0" y="17.97" width="6.72" height="7.03" rx="1.3" fill="#000"/><rect x="9.24" y="17.97" width="18.76" height="7.03" rx="1.3" fill="#000"/></svg>
<svg style="position:absolute;left:316px;top:883.4px;" width="20.4" height="23.2" viewBox="0 0 20.4 23.2"><path d="M0,0 L20.4,11.6 L0,23.2 Z" fill="#000"/></svg>
<div class="t" style="left:388.0px;top:882.6px;font-size:27.65px;line-height:27.65px;color:#111;font-weight:400;font-style:normal;">ProstateX-0008</div>
<div class="t" style="left:699.0px;top:882.6px;font-size:27.65px;line-height:27.65px;color:#111;font-weight:400;font-style:normal;">ProstateX-0008</div>
<div class="t" style="left:1410.0px;top:882.6px;font-size:27.65px;line-height:27.65px;color:#111;font-weight:400;font-style:normal;">M</div>
<div class="t" style="left:2344.0px;top:882.6px;font-size:27.65px;line-height:27.65px;color:#111;font-weight:400;font-style:normal;">1</div>
<div style="position:absolute;left:150px;top:925px;width:110px;height:54px;background:linear-gradient(90deg,#f6f6f6,#f3f3f3)"></div>
<div style="position:absolute;left:258px;top:925px;width:2px;height:54px;background:#dcdcdc"></div>
<div style="position:absolute;left:302px;top:925px;width:2px;height:54px;background:#dcdcdc"></div>
<div style="position:absolute;left:370px;top:925px;width:2px;height:54px;background:#dcdcdc"></div>
<div style="position:absolute;left:682px;top:925px;width:2px;height:54px;background:#dcdcdc"></div>
<div style="position:absolute;left:948px;top:925px;width:2px;height:54px;background:#dcdcdc"></div>
<div style="position:absolute;left:1216px;top:925px;width:2px;height:54px;background:#dcdcdc"></div>
<div style="position:absolute;left:1394px;top:925px;width:2px;height:54px;background:#dcdcdc"></div>
<div style="position:absolute;left:1482px;top:925px;width:2px;height:54px;background:#dcdcdc"></div>
<div style="position:absolute;left:2328px;top:925px;width:2px;height:54px;background:#dcdcdc"></div>
<div class="t" style="left:158.0px;top:932.8px;font-size:27.4px;line-height:27.4px;color:#222;font-weight:400;font-style:normal;">12.</div>
<svg style="position:absolute;left:224.6px;top:936.9px;" width="8.8" height="32.0" viewBox="0 0 8.8 32.0"><circle cx="4.4" cy="4.4" r="3.9" fill="#000"/><circle cx="4.4" cy="16.0" r="3.9" fill="#000"/><circle cx="4.4" cy="27.6" r="3.9" fill="#000"/></svg>
<svg style="position:absolute;left:267.4px;top:936.6px;" width="28" height="25" viewBox="0 0 28 25"><rect x="0" y="0.00" width="6.72" height="7.03" rx="1.3" fill="#000"/><rect x="9.24" y="0.00" width="18.76" height="7.03" rx="1.3" fill="#000"/><rect x="0" y="8.98" width="6.72" height="7.03" rx="1.3" fill="#000"/><rect x="9.24" y="8.98" width="18.76" height="7.03" rx="1.3" fill="#000"/><rect x="0" y="17.97" width="6.72" height="7.03" rx="1.3" fill="#000"/><rect x="9.24" y="17.97" width="18.76" height="7.03" rx="1.3" fill="#000"/></svg>
<svg style="position:absolute;left:315px;top:937.2px;" width="22.8" height="22.6" viewBox="0 0 22.8 22.6"><path d="M0,0 L22.8,0 L11.4,22.6 Z" fill="#000"/></svg>
<div class="t" style="left:388.0px;top:936.6px;font-size:27.65px;line-height:27.65px;color:#111;font-weight:400;font-style:normal;">ProstateX-0009</div>
<div class="t" style="left:699.0px;top:936.6px;font-size:27.65px;line-height:27.65px;color:#111;font-weight:400;font-style:normal;">ProstateX-0009</div>
<div class="t" style="left:1410.0px;top:936.6px;font-size:27.65px;line-height:27.65px;color:#111;font-weight:400;font-style:normal;">M</div>
<div class="t" style="left:2344.0px;top:936.6px;font-size:27.65px;line-height:27.65px;color:#111;font-weight:400;font-style:normal;">1</div>
<div style="position:absolute;left:150px;top:979px;width:2222px;height:55px;background:linear-gradient(180deg,#cfd0d2 0%,#eeeeef 22%,#f8f8f9 50%,#f6f6f7 85%,#e6e6e6 100%)"></div>
<div style="position:absolute;left:280px;top:979px;width:46px;height:55px;background:linear-gradient(160deg,#666 0%,#8d8d8d 35%,#b4b4b4 70%,#cdcdcd 100%)"></div>
<svg style="position:absolute;left:290.75px;top:991.25px;" width="8.5" height="31.1" viewBox="0 0 8.5 31.1"><circle cx="4.25" cy="4.25" r="3.75" fill="#333"/><circle cx="4.25" cy="15.55" r="3.75" fill="#333"/><circle cx="4.25" cy="26.85" r="3.75" fill="#333"/></svg>
<svg style="position:absolute;left:327px;top:990.6px;" width="28" height="25" viewBox="0 0 28 25"><rect x="0" y="0.00" width="6.72" height="7.03" rx="1.3" fill="#000"/><rect x="9.24" y="0.00" width="18.76" height="7.03" rx="1.3" fill="#000"/><rect x="0" y="8.98" width="6.72" height="7.03" rx="1.3" fill="#000"/><rect x="9.24" y="8.98" width="18.76" height="7.03" rx="1.3" fill="#000"/><rect x="0" y="17.97" width="6.72" height="7.03" rx="1.3" fill="#000"/><rect x="9.24" y="17.97" width="18.76" height="7.03" rx="1.3" fill="#000"/></svg>
<svg style="position:absolute;left:362.3px;top:991.7px;" width="22.7" height="22.2" viewBox="0 0 22.7 22.2"><path d="M0,0 L22.7,0 L11.35,22.2 Z" fill="#000"/></svg>
<div class="t" style="left:716.0px;top:992.7px;font-size:27.5px;line-height:27.5px;color:#2a2a2a;font-weight:400;font-style:normal;">1.3.6.1.4.1.14519.5.2.1.731</div>
<div class="t" style="left:1070.6px;top:992.7px;font-size:27.5px;line-height:27.5px;color:#2a2a2a;font-weight:400;font-style:normal;">2011-10-21</div>
<div class="t" style="left:1282.4px;top:992.7px;font-size:27.5px;line-height:27.5px;color:#2a2a2a;font-weight:400;font-style:normal;">14:47:2</div>
<div class="t" style="left:1806.4px;top:992.7px;font-size:27.5px;line-height:27.5px;color:#2a2a2a;font-weight:400;font-style:normal;">MR</div>
<div class="t" style="left:1913.0px;top:992.7px;font-size:27.5px;line-height:27.5px;color:#2a2a2a;font-weight:400;font-style:normal;">MR prostaat kanker</div>
<div class="t" style="left:2261.6px;top:992.7px;font-size:27.5px;line-height:27.5px;color:#2a2a2a;font-weight:400;font-style:normal;">54</div>
<div class="t" style="left:2322.7px;top:992.7px;font-size:27.5px;line-height:27.5px;color:#2a2a2a;font-weight:400;font-style:normal;">906</div>
<div style="position:absolute;left:1590px;top:979px;width:200px;height:55px;overflow:hidden">
<div class="t" style="left:5.4px;top:13.7px;font-size:27.5px;line-height:27.5px;color:#2a2a2a;font-weight:400;font-style:normal;">2218759257627</div>
</div>
<div style="position:absolute;left:150px;top:1034px;width:66px;height:592px;background:linear-gradient(90deg,#f4f5f6,#f8f8f8)"></div>
<div style="position:absolute;left:216px;top:1034px;width:108px;height:592px;background:linear-gradient(90deg,#cfcfcf 0%,#e9e9e9 10%,#f3f3f3 30%,#f7f7f7 100%)"></div>
<div style="position:absolute;left:150px;top:1034px;width:174px;height:592px;overflow:hidden;mix-blend-mode:multiply"><div style="position:absolute;left:-5px;top:25px;width:80px;height:150px;border-radius:50%;background:rgba(0,0,0,0.06);filter:blur(16px);transform:rotate(-25deg)"></div><div style="position:absolute;left:95px;top:90px;width:80px;height:140px;border-radius:50%;background:rgba(240,220,212,0.18);filter:blur(18px)"></div></div>
<div style="position:absolute;left:324px;top:1186px;width:103px;height:440px;background:linear-gradient(90deg,#cdcdcd 0%,#eaeaea 12%,#f6f6f5 35%,#f8f8f7 100%)"></div>
<div style="position:absolute;left:324px;top:1034px;width:2051px;height:49.5px;background:linear-gradient(180deg,#d6d6d6 0%,#f1f1f2 25%,#f9f9fa 55%,#f6f6f8 100%)"></div>
<div style="position:absolute;left:324px;top:1034px;width:110px;height:51.0px;background:linear-gradient(180deg,#c4c4c4 0%,#e2e2e2 25%,#ececec 55%,#d2d2d2 100%);box-shadow:inset 10px 0 10px -6px rgba(0,0,0,0.18)"></div>
<div style="position:absolute;left:428px;top:1082.0px;width:1947px;height:2px;background:#b2b2b2"></div>
<div style="position:absolute;left:324px;top:1083.5px;width:110px;height:1.5px;background:#b8b8b8"></div>
<div class="t" style="left:341.0px;top:1045.1px;font-size:27.4px;line-height:27.4px;color:#2a2a2a;font-weight:400;font-style:normal;">1.</div>
<svg style="position:absolute;left:398.5px;top:1045.3px;" width="9" height="32.0" viewBox="0 0 9 32.0"><circle cx="4.5" cy="4.5" r="4.0" fill="#000"/><circle cx="4.5" cy="16.0" r="4.0" fill="#000"/><circle cx="4.5" cy="27.5" r="4.0" fill="#000"/></svg>
<svg style="position:absolute;left:428.8px;top:1042.3px;" width="28" height="25.5" viewBox="0 0 28 25.5"><rect x="0" y="0.00" width="6.72" height="7.20" rx="1.3" fill="#000"/><rect x="9.24" y="0.00" width="18.76" height="7.20" rx="1.3" fill="#000"/><rect x="0" y="9.15" width="6.72" height="7.20" rx="1.3" fill="#000"/><rect x="9.24" y="9.15" width="18.76" height="7.20" rx="1.3" fill="#000"/><rect x="0" y="18.30" width="6.72" height="7.20" rx="1.3" fill="#000"/><rect x="9.24" y="18.30" width="18.76" height="7.20" rx="1.3" fill="#000"/></svg>
<svg style="position:absolute;left:463.5px;top:1043.0px;" width="20.5" height="23.3" viewBox="0 0 20.5 23.3"><path d="M0,0 L20.5,11.65 L0,23.3 Z" fill="#000"/></svg>
<div class="t" style="left:820.0px;top:1042.9px;font-size:27.4px;line-height:27.4px;color:#2d2d2d;font-weight:700;font-style:normal;">1</div>
<div class="t" style="left:1041.5px;top:1042.9px;font-size:27.4px;line-height:27.4px;color:#2d2d2d;font-weight:700;font-style:normal;">2011-10-21</div>
<div class="t" style="left:1263.4px;top:1042.9px;font-size:27.4px;line-height:27.4px;color:#2d2d2d;font-weight:700;font-style:normal;">14:47:21</div>
<div class="t" style="left:1486.0px;top:1042.9px;font-size:27.4px;line-height:27.4px;color:#2d2d2d;font-weight:700;font-style:normal;">PROSTATE</div>
<div class="t" style="left:1707.0px;top:1042.9px;font-size:27.4px;line-height:27.4px;color:#2d2d2d;font-weight:700;font-style:normal;">MR</div>
<div class="t" style="left:1929.0px;top:1042.9px;font-size:27.4px;line-height:27.4px;color:#2d2d2d;font-weight:700;font-style:normal;">t2_localizer</div>
<div style="position:absolute;left:2300px;top:1034px;width:73px;height:49px;overflow:hidden">
<div class="t" style="left:48.5px;top:8.9px;font-size:27.4px;line-height:27.4px;color:#2d2d2d;font-weight:700;font-style:normal;">13</div>
</div>
<div style="position:absolute;left:324px;top:1083.5px;width:2051px;height:49.5px;background:linear-gradient(180deg,#eeeeee 0%,#f8f8f9 30%,#f9f9fa 60%,#f4f4f6 100%)"></div>
<div style="position:absolute;left:324px;top:1083.5px;width:110px;height:51.0px;background:linear-gradient(180deg,#c4c4c4 0%,#e2e2e2 25%,#ececec 55%,#d2d2d2 100%);box-shadow:inset 10px 0 10px -6px rgba(0,0,0,0.18)"></div>
<div style="position:absolute;left:428px;top:1131.5px;width:1947px;height:2px;background:#b2b2b2"></div>
<div style="position:absolute;left:324px;top:1133.0px;width:110px;height:1.5px;background:#b8b8b8"></div>
<div class="t" style="left:341.0px;top:1095.1px;font-size:27.4px;line-height:27.4px;color:#2a2a2a;font-weight:400;font-style:normal;">2.</div>
<svg style="position:absolute;left:398.5px;top:1095.3px;" width="9" height="32.0" viewBox="0 0 9 32.0"><circle cx="4.5" cy="4.5" r="4.0" fill="#000"/><circle cx="4.5" cy="16.0" r="4.0" fill="#000"/><circle cx="4.5" cy="27.5" r="4.0" fill="#000"/></svg>
<svg style="position:absolute;left:428.8px;top:1092.3px;" width="28" height="25.5" viewBox="0 0 28 25.5"><rect x="0" y="0.00" width="6.72" height="7.20" rx="1.3" fill="#000"/><rect x="9.24" y="0.00" width="18.76" height="7.20" rx="1.3" fill="#000"/><rect x="0" y="9.15" width="6.72" height="7.20" rx="1.3" fill="#000"/><rect x="9.24" y="9.15" width="18.76" height="7.20" rx="1.3" fill="#000"/><rect x="0" y="18.30" width="6.72" height="7.20" rx="1.3" fill="#000"/><rect x="9.24" y="18.30" width="18.76" height="7.20" rx="1.3" fill="#000"/></svg>
<svg style="position:absolute;left:463.5px;top:1093.0px;" width="20.5" height="23.3" viewBox="0 0 20.5 23.3"><path d="M0,0 L20.5,11.65 L0,23.3 Z" fill="#000"/></svg>
<div class="t" style="left:820.0px;top:1092.9px;font-size:27.4px;line-height:27.4px;color:#2d2d2d;font-weight:700;font-style:normal;">2</div>
<div class="t" style="left:1041.5px;top:1092.9px;font-size:27.4px;line-height:27.4px;color:#2d2d2d;font-weight:700;font-style:normal;">2011-10-21</div>
<div class="t" style="left:1263.4px;top:1092.9px;font-size:27.4px;line-height:27.4px;color:#2d2d2d;font-weight:700;font-style:normal;">14:47:21</div>
<div class="t" style="left:1486.0px;top:1092.9px;font-size:27.4px;line-height:27.4px;color:#2d2d2d;font-weight:700;font-style:normal;">PROSTATE</div>
<div class="t" style="left:1707.0px;top:1092.9px;font-size:27.4px;line-height:27.4px;color:#2d2d2d;font-weight:700;font-style:normal;">MR</div>
<div class="t" style="left:1929.0px;top:1092.9px;font-size:27.4px;line-height:27.4px;color:#2d2d2d;font-weight:700;font-style:normal;">t2_loc sag</div>
<div style="position:absolute;left:2300px;top:1083.5px;width:73px;height:49px;overflow:hidden">
<div class="t" style="left:47.0px;top:9.4px;font-size:27.4px;line-height:27.4px;color:#2d2d2d;font-weight:700;font-style:normal;">3</div>
</div>
<div style="position:absolute;left:324px;top:1133px;width:2051px;height:49.5px;background:linear-gradient(180deg,#e8e8ea 0%,#f2f2f4 30%,#f5f5f7 60%,#f0f0f2 100%)"></div>
<div style="position:absolute;left:324px;top:1133px;width:110px;height:51.0px;background:linear-gradient(180deg,#c4c4c4 0%,#e2e2e2 25%,#ececec 55%,#d2d2d2 100%);box-shadow:inset 10px 0 10px -6px rgba(0,0,0,0.18)"></div>
<div style="position:absolute;left:428px;top:1181.0px;width:1947px;height:2px;background:#b2b2b2"></div>
<div style="position:absolute;left:324px;top:1182.5px;width:110px;height:1.5px;background:#b8b8b8"></div>
<div class="t" style="left:341.0px;top:1145.1px;font-size:27.4px;line-height:27.4px;color:#2a2a2a;font-weight:400;font-style:normal;">3.</div>
<svg style="position:absolute;left:398.5px;top:1145.3px;" width="9" height="32.0" viewBox="0 0 9 32.0"><circle cx="4.5" cy="4.5" r="4.0" fill="#000"/><circle cx="4.5" cy="16.0" r="4.0" fill="#000"/><circle cx="4.5" cy="27.5" r="4.0" fill="#000"/></svg>
<svg style="position:absolute;left:428.8px;top:1142.3px;" width="28" height="25.5" viewBox="0 0 28 25.5"><rect x="0" y="0.00" width="6.72" height="7.20" rx="1.3" fill="#000"/><rect x="9.24" y="0.00" width="18.76" height="7.20" rx="1.3" fill="#000"/><rect x="0" y="9.15" width="6.72" height="7.20" rx="1.3" fill="#000"/><rect x="9.24" y="9.15" width="18.76" height="7.20" rx="1.3" fill="#000"/><rect x="0" y="18.30" width="6.72" height="7.20" rx="1.3" fill="#000"/><rect x="9.24" y="18.30" width="18.76" height="7.20" rx="1.3" fill="#000"/></svg>
<svg style="position:absolute;left:462.6px;top:1143.6px;" width="22.5" height="22.7" viewBox="0 0 22.5 22.7"><path d="M0,0 L22.5,0 L11.25,22.7 Z" fill="#000"/></svg>
<div class="t" style="left:820.0px;top:1142.9px;font-size:27.4px;line-height:27.4px;color:#2d2d2d;font-weight:700;font-style:normal;">3</div>
<div class="t" style="left:1041.5px;top:1142.9px;font-size:27.4px;line-height:27.4px;color:#2d2d2d;font-weight:700;font-style:normal;">2011-10-21</div>
<div class="t" style="left:1263.4px;top:1142.9px;font-size:27.4px;line-height:27.4px;color:#2d2d2d;font-weight:700;font-style:normal;">14:47:21</div>
<div class="t" style="left:1486.0px;top:1142.9px;font-size:27.4px;line-height:27.4px;color:#2d2d2d;font-weight:700;font-style:normal;">PROSTATE</div>
<div class="t" style="left:1707.0px;top:1142.9px;font-size:27.4px;line-height:27.4px;color:#2d2d2d;font-weight:700;font-style:normal;">MR</div>
<div class="t" style="left:1929.0px;top:1142.9px;font-size:27.4px;line-height:27.4px;color:#2d2d2d;font-weight:700;font-style:normal;">t2_tse_sag</div>
<div style="position:absolute;left:2300px;top:1133px;width:73px;height:49px;overflow:hidden">
<div class="t" style="left:48.5px;top:9.9px;font-size:27.4px;line-height:27.4px;color:#2d2d2d;font-weight:700;font-style:normal;">19</div>
</div>
<div style="position:absolute;left:427px;top:1182.2px;width:1948px;height:1.6px;background:#a9a9a9"></div>
<div style="position:absolute;left:428px;top:1183.8px;width:1947px;height:50px;background:linear-gradient(180deg,#c6c6c6 0%,#dcdcdc 22%,#e4e4e5 50%,#e2e2e3 75%,#cdcdcd 100%)"></div>
<div style="position:absolute;left:428px;top:1183.8px;width:96px;height:51px;background:linear-gradient(180deg,#c2c2c2 0%,#e0e0e0 28%,#eaeaea 50%,#e0e0e0 78%,#c6c6c6 100%);box-shadow:inset 10px 0 10px -6px rgba(0,0,0,0.16)"></div>
<div style="position:absolute;left:426px;top:1183.8px;width:2px;height:50px;background:#d6d6d6"></div>
<div style="position:absolute;left:524px;top:1183.8px;width:4px;height:50px;background:#d2d2d2"></div>
<div style="position:absolute;left:528px;top:1232.6px;width:1847px;height:1.7px;background:#a8a8a8"></div>
<div style="position:absolute;left:426px;top:1234.6px;width:102px;height:1.7px;background:#adadad"></div>
<div class="t" style="left:440.0px;top:1194.7px;font-size:27.3px;line-height:27.3px;color:#2a2a2a;font-weight:400;font-style:normal;">1.</div>
<svg style="position:absolute;left:500.5px;top:1194.8px;" width="9" height="32.2" viewBox="0 0 9 32.2"><circle cx="4.5" cy="4.5" r="4.0" fill="#000"/><circle cx="4.5" cy="16.1" r="4.0" fill="#000"/><circle cx="4.5" cy="27.7" r="4.0" fill="#000"/></svg>
<svg style="position:absolute;left:527px;top:1192.3px;" width="27.8" height="25.4" viewBox="0 0 27.8 25.4"><rect x="0" y="0.00" width="6.67" height="7.17" rx="1.3" fill="#000"/><rect x="9.17" y="0.00" width="18.63" height="7.17" rx="1.3" fill="#000"/><rect x="0" y="9.12" width="6.67" height="7.17" rx="1.3" fill="#000"/><rect x="9.17" y="9.12" width="18.63" height="7.17" rx="1.3" fill="#000"/><rect x="0" y="18.23" width="6.67" height="7.17" rx="1.3" fill="#000"/><rect x="9.17" y="18.23" width="18.63" height="7.17" rx="1.3" fill="#000"/></svg>
<svg style="position:absolute;left:560.2px;top:1192.3px;" width="27.8" height="25.4" viewBox="0 0 27.8 25.4"><circle cx="2.4" cy="2.10" r="2.4" fill="#000"/><rect x="7.37" y="0.00" width="20.43" height="4.2" rx="1.5" fill="#000"/><circle cx="2.4" cy="9.17" r="2.4" fill="#000"/><rect x="7.37" y="7.07" width="20.43" height="4.2" rx="1.5" fill="#000"/><circle cx="2.4" cy="16.23" r="2.4" fill="#000"/><rect x="7.37" y="14.13" width="20.43" height="4.2" rx="1.5" fill="#000"/><circle cx="2.4" cy="23.30" r="2.4" fill="#000"/><rect x="7.37" y="21.20" width="20.43" height="4.2" rx="1.5" fill="#000"/></svg>
<div class="t" style="left:613.5px;top:1192.6px;font-size:27.6px;line-height:27.6px;color:#000;font-weight:700;font-style:normal;">1.2.840.10008.5.1.4.1.1.4</div>
<div class="t" style="left:958.0px;top:1192.6px;font-size:27.6px;line-height:27.6px;color:#000;font-weight:700;font-style:normal;">1</div>
<div class="t" style="left:1224.7px;top:1192.6px;font-size:27.6px;line-height:27.6px;color:#000;font-weight:700;font-style:normal;">2011-10-21</div>
<div class="t" style="left:1493.0px;top:1192.6px;font-size:27.6px;line-height:27.6px;color:#000;font-weight:700;font-style:normal;">14:53:26</div>
<div class="t" style="left:1761.0px;top:1192.6px;font-size:27.6px;line-height:27.6px;color:#000;font-weight:700;font-style:normal;">320x320 16 bit</div>
<div style="position:absolute;left:428px;top:1233.8px;width:1947px;height:50px;background:linear-gradient(180deg,#c6c6c6 0%,#dcdcdc 22%,#e4e4e5 50%,#e2e2e3 75%,#cdcdcd 100%)"></div>
<div style="position:absolute;left:428px;top:1233.8px;width:96px;height:51px;background:linear-gradient(180deg,#c2c2c2 0%,#e0e0e0 28%,#eaeaea 50%,#e0e0e0 78%,#c6c6c6 100%);box-shadow:inset 10px 0 10px -6px rgba(0,0,0,0.16)"></div>
<div style="position:absolute;left:426px;top:1233.8px;width:2px;height:50px;background:#d6d6d6"></div>
<div style="position:absolute;left:524px;top:1233.8px;width:4px;height:50px;background:#d2d2d2"></div>
<div style="position:absolute;left:528px;top:1282.6px;width:1847px;height:1.7px;background:#a8a8a8"></div>
<div style="position:absolute;left:426px;top:1284.6px;width:102px;height:1.7px;background:#adadad"></div>
<div class="t" style="left:440.0px;top:1244.7px;font-size:27.3px;line-height:27.3px;color:#2a2a2a;font-weight:400;font-style:normal;">2.</div>
<svg style="position:absolute;left:500.5px;top:1244.8px;" width="9" height="32.2" viewBox="0 0 9 32.2"><circle cx="4.5" cy="4.5" r="4.0" fill="#000"/><circle cx="4.5" cy="16.1" r="4.0" fill="#000"/><circle cx="4.5" cy="27.7" r="4.0" fill="#000"/></svg>
<svg style="position:absolute;left:527px;top:1242.3px;" width="27.8" height="25.4" viewBox="0 0 27.8 25.4"><rect x="0" y="0.00" width="6.67" height="7.17" rx="1.3" fill="#000"/><rect x="9.17" y="0.00" width="18.63" height="7.17" rx="1.3" fill="#000"/><rect x="0" y="9.12" width="6.67" height="7.17" rx="1.3" fill="#000"/><rect x="9.17" y="9.12" width="18.63" height="7.17" rx="1.3" fill="#000"/><rect x="0" y="18.23" width="6.67" height="7.17" rx="1.3" fill="#000"/><rect x="9.17" y="18.23" width="18.63" height="7.17" rx="1.3" fill="#000"/></svg>
<svg style="position:absolute;left:560.2px;top:1242.3px;" width="27.8" height="25.4" viewBox="0 0 27.8 25.4"><circle cx="2.4" cy="2.10" r="2.4" fill="#000"/><rect x="7.37" y="0.00" width="20.43" height="4.2" rx="1.5" fill="#000"/><circle cx="2.4" cy="9.17" r="2.4" fill="#000"/><rect x="7.37" y="7.07" width="20.43" height="4.2" rx="1.5" fill="#000"/><circle cx="2.4" cy="16.23" r="2.4" fill="#000"/><rect x="7.37" y="14.13" width="20.43" height="4.2" rx="1.5" fill="#000"/><circle cx="2.4" cy="23.30" r="2.4" fill="#000"/><rect x="7.37" y="21.20" width="20.43" height="4.2" rx="1.5" fill="#000"/></svg>
<div class="t" style="left:613.5px;top:1242.6px;font-size:27.6px;line-height:27.6px;color:#000;font-weight:700;font-style:normal;">1.2.840.10008.5.1.4.1.1.4</div>
<div class="t" style="left:958.0px;top:1242.6px;font-size:27.6px;line-height:27.6px;color:#000;font-weight:700;font-style:normal;">2</div>
<div class="t" style="left:1224.7px;top:1242.6px;font-size:27.6px;line-height:27.6px;color:#000;font-weight:700;font-style:normal;">2011-10-21</div>
<div class="t" style="left:1493.0px;top:1242.6px;font-size:27.6px;line-height:27.6px;color:#000;font-weight:700;font-style:normal;">14:53:27</div>
<div class="t" style="left:1761.0px;top:1242.6px;font-size:27.6px;line-height:27.6px;color:#000;font-weight:700;font-style:normal;">320x320 16 bit</div>
<div style="position:absolute;left:428px;top:1283.8px;width:1947px;height:50px;background:linear-gradient(180deg,#c6c6c6 0%,#dcdcdc 22%,#e4e4e5 50%,#e2e2e3 75%,#cdcdcd 100%)"></div>
<div style="position:absolute;left:428px;top:1283.8px;width:96px;height:51px;background:linear-gradient(180deg,#c2c2c2 0%,#e0e0e0 28%,#eaeaea 50%,#e0e0e0 78%,#c6c6c6 100%);box-shadow:inset 10px 0 10px -6px rgba(0,0,0,0.16)"></div>
<div style="position:absolute;left:426px;top:1283.8px;width:2px;height:50px;background:#d6d6d6"></div>
<div style="position:absolute;left:524px;top:1283.8px;width:4px;height:50px;background:#d2d2d2"></div>
<div style="position:absolute;left:528px;top:1332.6px;width:1847px;height:1.7px;background:#a8a8a8"></div>
<div style="position:absolute;left:426px;top:1334.6px;width:102px;height:1.7px;background:#adadad"></div>
<div class="t" style="left:440.0px;top:1294.7px;font-size:27.3px;line-height:27.3px;color:#2a2a2a;font-weight:400;font-style:normal;">3.</div>
<svg style="position:absolute;left:500.5px;top:1294.8px;" width="9" height="32.2" viewBox="0 0 9 32.2"><circle cx="4.5" cy="4.5" r="4.0" fill="#000"/><circle cx="4.5" cy="16.1" r="4.0" fill="#000"/><circle cx="4.5" cy="27.7" r="4.0" fill="#000"/></svg>
<svg style="position:absolute;left:527px;top:1292.3px;" width="27.8" height="25.4" viewBox="0 0 27.8 25.4"><rect x="0" y="0.00" width="6.67" height="7.17" rx="1.3" fill="#000"/><rect x="9.17" y="0.00" width="18.63" height="7.17" rx="1.3" fill="#000"/><rect x="0" y="9.12" width="6.67" height="7.17" rx="1.3" fill="#000"/><rect x="9.17" y="9.12" width="18.63" height="7.17" rx="1.3" fill="#000"/><rect x="0" y="18.23" width="6.67" height="7.17" rx="1.3" fill="#000"/><rect x="9.17" y="18.23" width="18.63" height="7.17" rx="1.3" fill="#000"/></svg>
<svg style="position:absolute;left:560.2px;top:1292.3px;" width="27.8" height="25.4" viewBox="0 0 27.8 25.4"><circle cx="2.4" cy="2.10" r="2.4" fill="#000"/><rect x="7.37" y="0.00" width="20.43" height="4.2" rx="1.5" fill="#000"/><circle cx="2.4" cy="9.17" r="2.4" fill="#000"/><rect x="7.37" y="7.07" width="20.43" height="4.2" rx="1.5" fill="#000"/><circle cx="2.4" cy="16.23" r="2.4" fill="#000"/><rect x="7.37" y="14.13" width="20.43" height="4.2" rx="1.5" fill="#000"/><circle cx="2.4" cy="23.30" r="2.4" fill="#000"/><rect x="7.37" y="21.20" width="20.43" height="4.2" rx="1.5" fill="#000"/></svg>
<div class="t" style="left:613.5px;top:1292.6px;font-size:27.6px;line-height:27.6px;color:#000;font-weight:700;font-style:normal;">1.2.840.10008.5.1.4.1.1.4</div>
<div class="t" style="left:958.0px;top:1292.6px;font-size:27.6px;line-height:27.6px;color:#000;font-weight:700;font-style:normal;">3</div>
<div class="t" style="left:1224.7px;top:1292.6px;font-size:27.6px;line-height:27.6px;color:#000;font-weight:700;font-style:normal;">2011-10-21</div>
<div class="t" style="left:1493.0px;top:1292.6px;font-size:27.6px;line-height:27.6px;color:#000;font-weight:700;font-style:normal;">14:53:27</div>
<div class="t" style="left:1761.0px;top:1292.6px;font-size:27.6px;line-height:27.6px;color:#000;font-weight:700;font-style:normal;">320x320 16 bit</div>
<div style="position:absolute;left:428px;top:1333.8px;width:1947px;height:50px;background:linear-gradient(180deg,#c6c6c6 0%,#dcdcdc 22%,#e4e4e5 50%,#e2e2e3 75%,#cdcdcd 100%)"></div>
<div style="position:absolute;left:428px;top:1333.8px;width:96px;height:51px;background:linear-gradient(180deg,#c2c2c2 0%,#e0e0e0 28%,#eaeaea 50%,#e0e0e0 78%,#c6c6c6 100%);box-shadow:inset 10px 0 10px -6px rgba(0,0,0,0.16)"></div>
<div style="position:absolute;left:426px;top:1333.8px;width:2px;height:50px;background:#d6d6d6"></div>
<div style="position:absolute;left:524px;top:1333.8px;width:4px;height:50px;background:#d2d2d2"></div>
<div style="position:absolute;left:528px;top:1382.6px;width:1847px;height:1.7px;background:#a8a8a8"></div>
<div style="position:absolute;left:426px;top:1384.6px;width:102px;height:1.7px;background:#adadad"></div>
<div class="t" style="left:440.0px;top:1344.7px;font-size:27.3px;line-height:27.3px;color:#2a2a2a;font-weight:400;font-style:normal;">4.</div>
<svg style="position:absolute;left:500.5px;top:1344.8px;" width="9" height="32.2" viewBox="0 0 9 32.2"><circle cx="4.5" cy="4.5" r="4.0" fill="#000"/><circle cx="4.5" cy="16.1" r="4.0" fill="#000"/><circle cx="4.5" cy="27.7" r="4.0" fill="#000"/></svg>
<svg style="position:absolute;left:527px;top:1342.3px;" width="27.8" height="25.4" viewBox="0 0 27.8 25.4"><rect x="0" y="0.00" width="6.67" height="7.17" rx="1.3" fill="#000"/><rect x="9.17" y="0.00" width="18.63" height="7.17" rx="1.3" fill="#000"/><rect x="0" y="9.12" width="6.67" height="7.17" rx="1.3" fill="#000"/><rect x="9.17" y="9.12" width="18.63" height="7.17" rx="1.3" fill="#000"/><rect x="0" y="18.23" width="6.67" height="7.17" rx="1.3" fill="#000"/><rect x="9.17" y="18.23" width="18.63" height="7.17" rx="1.3" fill="#000"/></svg>
<svg style="position:absolute;left:560.2px;top:1342.3px;" width="27.8" height="25.4" viewBox="0 0 27.8 25.4"><circle cx="2.4" cy="2.10" r="2.4" fill="#000"/><rect x="7.37" y="0.00" width="20.43" height="4.2" rx="1.5" fill="#000"/><circle cx="2.4" cy="9.17" r="2.4" fill="#000"/><rect x="7.37" y="7.07" width="20.43" height="4.2" rx="1.5" fill="#000"/><circle cx="2.4" cy="16.23" r="2.4" fill="#000"/><rect x="7.37" y="14.13" width="20.43" height="4.2" rx="1.5" fill="#000"/><circle cx="2.4" cy="23.30" r="2.4" fill="#000"/><rect x="7.37" y="21.20" width="20.43" height="4.2" rx="1.5" fill="#000"/></svg>
<div class="t" style="left:613.5px;top:1342.6px;font-size:27.6px;line-height:27.6px;color:#000;font-weight:700;font-style:normal;">1.2.840.10008.5.1.4.1.1.4</div>
<div class="t" style="left:958.0px;top:1342.6px;font-size:27.6px;line-height:27.6px;color:#000;font-weight:700;font-style:normal;">4</div>
<div class="t" style="left:1224.7px;top:1342.6px;font-size:27.6px;line-height:27.6px;color:#000;font-weight:700;font-style:normal;">2011-10-21</div>
<div class="t" style="left:1493.0px;top:1342.6px;font-size:27.6px;line-height:27.6px;color:#000;font-weight:700;font-style:normal;">14:53:27</div>
<div class="t" style="left:1761.0px;top:1342.6px;font-size:27.6px;line-height:27.6px;color:#000;font-weight:700;font-style:normal;">320x320 16 bit</div>
<div style="position:absolute;left:428px;top:1383.8px;width:1947px;height:50px;background:linear-gradient(180deg,#c6c6c6 0%,#dcdcdc 22%,#e4e4e5 50%,#e2e2e3 75%,#cdcdcd 100%)"></div>
<div style="position:absolute;left:428px;top:1383.8px;width:96px;height:51px;background:linear-gradient(180deg,#c2c2c2 0%,#e0e0e0 28%,#eaeaea 50%,#e0e0e0 78%,#c6c6c6 100%);box-shadow:inset 10px 0 10px -6px rgba(0,0,0,0.16)"></div>
<div style="position:absolute;left:426px;top:1383.8px;width:2px;height:50px;background:#d6d6d6"></div>
<div style="position:absolute;left:524px;top:1383.8px;width:4px;height:50px;background:#d2d2d2"></div>
<div style="position:absolute;left:528px;top:1432.6px;width:1847px;height:1.7px;background:#a8a8a8"></div>
<div style="position:absolute;left:426px;top:1434.6px;width:102px;height:1.7px;background:#adadad"></div>
<div class="t" style="left:440.0px;top:1394.7px;font-size:27.3px;line-height:27.3px;color:#2a2a2a;font-weight:400;font-style:normal;">5.</div>
<svg style="position:absolute;left:500.5px;top:1394.8px;" width="9" height="32.2" viewBox="0 0 9 32.2"><circle cx="4.5" cy="4.5" r="4.0" fill="#000"/><circle cx="4.5" cy="16.1" r="4.0" fill="#000"/><circle cx="4.5" cy="27.7" r="4.0" fill="#000"/></svg>
<svg style="position:absolute;left:527px;top:1392.3px;" width="27.8" height="25.4" viewBox="0 0 27.8 25.4"><rect x="0" y="0.00" width="6.67" height="7.17" rx="1.3" fill="#000"/><rect x="9.17" y="0.00" width="18.63" height="7.17" rx="1.3" fill="#000"/><rect x="0" y="9.12" width="6.67" height="7.17" rx="1.3" fill="#000"/><rect x="9.17" y="9.12" width="18.63" height="7.17" rx="1.3" fill="#000"/><rect x="0" y="18.23" width="6.67" height="7.17" rx="1.3" fill="#000"/><rect x="9.17" y="18.23" width="18.63" height="7.17" rx="1.3" fill="#000"/></svg>
<svg style="position:absolute;left:560.2px;top:1392.3px;" width="27.8" height="25.4" viewBox="0 0 27.8 25.4"><circle cx="2.4" cy="2.10" r="2.4" fill="#000"/><rect x="7.37" y="0.00" width="20.43" height="4.2" rx="1.5" fill="#000"/><circle cx="2.4" cy="9.17" r="2.4" fill="#000"/><rect x="7.37" y="7.07" width="20.43" height="4.2" rx="1.5" fill="#000"/><circle cx="2.4" cy="16.23" r="2.4" fill="#000"/><rect x="7.37" y="14.13" width="20.43" height="4.2" rx="1.5" fill="#000"/><circle cx="2.4" cy="23.30" r="2.4" fill="#000"/><rect x="7.37" y="21.20" width="20.43" height="4.2" rx="1.5" fill="#000"/></svg>
<div class="t" style="left:613.5px;top:1392.6px;font-size:27.6px;line-height:27.6px;color:#000;font-weight:700;font-style:normal;">1.2.840.10008.5.1.4.1.1.4</div>
<div class="t" style="left:958.0px;top:1392.6px;font-size:27.6px;line-height:27.6px;color:#000;font-weight:700;font-style:normal;">5</div>
<div class="t" style="left:1224.7px;top:1392.6px;font-size:27.6px;line-height:27.6px;color:#000;font-weight:700;font-style:normal;">2011-10-21</div>
<div class="t" style="left:1493.0px;top:1392.6px;font-size:27.6px;line-height:27.6px;color:#000;font-weight:700;font-style:normal;">14:53:27</div>
<div class="t" style="left:1761.0px;top:1392.6px;font-size:27.6px;line-height:27.6px;color:#000;font-weight:700;font-style:normal;">320x320 16 bit</div>
<div style="position:absolute;left:428px;top:1433.8px;width:1947px;height:50px;background:linear-gradient(180deg,#c6c6c6 0%,#dcdcdc 22%,#e4e4e5 50%,#e2e2e3 75%,#cdcdcd 100%)"></div>
<div style="position:absolute;left:428px;top:1433.8px;width:96px;height:51px;background:linear-gradient(180deg,#c2c2c2 0%,#e0e0e0 28%,#eaeaea 50%,#e0e0e0 78%,#c6c6c6 100%);box-shadow:inset 10px 0 10px -6px rgba(0,0,0,0.16)"></div>
<div style="position:absolute;left:426px;top:1433.8px;width:2px;height:50px;background:#d6d6d6"></div>
<div style="position:absolute;left:524px;top:1433.8px;width:4px;height:50px;background:#d2d2d2"></div>
<div style="position:absolute;left:528px;top:1482.6px;width:1847px;height:1.7px;background:#a8a8a8"></div>
<div style="position:absolute;left:426px;top:1484.6px;width:102px;height:1.7px;background:#adadad"></div>
<div class="t" style="left:440.0px;top:1444.7px;font-size:27.3px;line-height:27.3px;color:#2a2a2a;font-weight:400;font-style:normal;">6.</div>
<svg style="position:absolute;left:500.5px;top:1444.8px;" width="9" height="32.2" viewBox="0 0 9 32.2"><circle cx="4.5" cy="4.5" r="4.0" fill="#000"/><circle cx="4.5" cy="16.1" r="4.0" fill="#000"/><circle cx="4.5" cy="27.7" r="4.0" fill="#000"/></svg>
<svg style="position:absolute;left:527px;top:1442.3px;" width="27.8" height="25.4" viewBox="0 0 27.8 25.4"><rect x="0" y="0.00" width="6.67" height="7.17" rx="1.3" fill="#000"/><rect x="9.17" y="0.00" width="18.63" height="7.17" rx="1.3" fill="#000"/><rect x="0" y="9.12" width="6.67" height="7.17" rx="1.3" fill="#000"/><rect x="9.17" y="9.12" width="18.63" height="7.17" rx="1.3" fill="#000"/><rect x="0" y="18.23" width="6.67" height="7.17" rx="1.3" fill="#000"/><rect x="9.17" y="18.23" width="18.63" height="7.17" rx="1.3" fill="#000"/></svg>
<svg style="position:absolute;left:560.2px;top:1442.3px;" width="27.8" height="25.4" viewBox="0 0 27.8 25.4"><circle cx="2.4" cy="2.10" r="2.4" fill="#000"/><rect x="7.37" y="0.00" width="20.43" height="4.2" rx="1.5" fill="#000"/><circle cx="2.4" cy="9.17" r="2.4" fill="#000"/><rect x="7.37" y="7.07" width="20.43" height="4.2" rx="1.5" fill="#000"/><circle cx="2.4" cy="16.23" r="2.4" fill="#000"/><rect x="7.37" y="14.13" width="20.43" height="4.2" rx="1.5" fill="#000"/><circle cx="2.4" cy="23.30" r="2.4" fill="#000"/><rect x="7.37" y="21.20" width="20.43" height="4.2" rx="1.5" fill="#000"/></svg>
<div class="t" style="left:613.5px;top:1442.6px;font-size:27.6px;line-height:27.6px;color:#000;font-weight:700;font-style:normal;">1.2.840.10008.5.1.4.1.1.4</div>
<div class="t" style="left:958.0px;top:1442.6px;font-size:27.6px;line-height:27.6px;color:#000;font-weight:700;font-style:normal;">6</div>
<div class="t" style="left:1224.7px;top:1442.6px;font-size:27.6px;line-height:27.6px;color:#000;font-weight:700;font-style:normal;">2011-10-21</div>
<div class="t" style="left:1493.0px;top:1442.6px;font-size:27.6px;line-height:27.6px;color:#000;font-weight:700;font-style:normal;">14:53:27</div>
<div class="t" style="left:1761.0px;top:1442.6px;font-size:27.6px;line-height:27.6px;color:#000;font-weight:700;font-style:normal;">320x320 16 bit</div>
<div style="position:absolute;left:428px;top:1483.8px;width:1947px;height:50px;background:linear-gradient(180deg,#c6c6c6 0%,#dcdcdc 22%,#e4e4e5 50%,#e2e2e3 75%,#cdcdcd 100%)"></div>
<div style="position:absolute;left:428px;top:1483.8px;width:96px;height:51px;background:linear-gradient(180deg,#c2c2c2 0%,#e0e0e0 28%,#eaeaea 50%,#e0e0e0 78%,#c6c6c6 100%);box-shadow:inset 10px 0 10px -6px rgba(0,0,0,0.16)"></div>
<div style="position:absolute;left:426px;top:1483.8px;width:2px;height:50px;background:#d6d6d6"></div>
<div style="position:absolute;left:524px;top:1483.8px;width:4px;height:50px;background:#d2d2d2"></div>
<div style="position:absolute;left:528px;top:1532.6px;width:1847px;height:1.7px;background:#a8a8a8"></div>
<div style="position:absolute;left:426px;top:1534.6px;width:102px;height:1.7px;background:#adadad"></div>
<div class="t" style="left:440.0px;top:1494.7px;font-size:27.3px;line-height:27.3px;color:#2a2a2a;font-weight:400;font-style:normal;">7.</div>
<svg style="position:absolute;left:500.5px;top:1494.8px;" width="9" height="32.2" viewBox="0 0 9 32.2"><circle cx="4.5" cy="4.5" r="4.0" fill="#000"/><circle cx="4.5" cy="16.1" r="4.0" fill="#000"/><circle cx="4.5" cy="27.7" r="4.0" fill="#000"/></svg>
<svg style="position:absolute;left:527px;top:1492.3px;" width="27.8" height="25.4" viewBox="0 0 27.8 25.4"><rect x="0" y="0.00" width="6.67" height="7.17" rx="1.3" fill="#000"/><rect x="9.17" y="0.00" width="18.63" height="7.17" rx="1.3" fill="#000"/><rect x="0" y="9.12" width="6.67" height="7.17" rx="1.3" fill="#000"/><rect x="9.17" y="9.12" width="18.63" height="7.17" rx="1.3" fill="#000"/><rect x="0" y="18.23" width="6.67" height="7.17" rx="1.3" fill="#000"/><rect x="9.17" y="18.23" width="18.63" height="7.17" rx="1.3" fill="#000"/></svg>
<svg style="position:absolute;left:560.2px;top:1492.3px;" width="27.8" height="25.4" viewBox="0 0 27.8 25.4"><circle cx="2.4" cy="2.10" r="2.4" fill="#000"/><rect x="7.37" y="0.00" width="20.43" height="4.2" rx="1.5" fill="#000"/><circle cx="2.4" cy="9.17" r="2.4" fill="#000"/><rect x="7.37" y="7.07" width="20.43" height="4.2" rx="1.5" fill="#000"/><circle cx="2.4" cy="16.23" r="2.4" fill="#000"/><rect x="7.37" y="14.13" width="20.43" height="4.2" rx="1.5" fill="#000"/><circle cx="2.4" cy="23.30" r="2.4" fill="#000"/><rect x="7.37" y="21.20" width="20.43" height="4.2" rx="1.5" fill="#000"/></svg>
<div class="t" style="left:613.5px;top:1492.6px;font-size:27.6px;line-height:27.6px;color:#000;font-weight:700;font-style:normal;">1.2.840.10008.5.1.4.1.1.4</div>
<div class="t" style="left:958.0px;top:1492.6px;font-size:27.6px;line-height:27.6px;color:#000;font-weight:700;font-style:normal;">7</div>
<div class="t" style="left:1224.7px;top:1492.6px;font-size:27.6px;line-height:27.6px;color:#000;font-weight:700;font-style:normal;">2011-10-21</div>
<div class="t" style="left:1493.0px;top:1492.6px;font-size:27.6px;line-height:27.6px;color:#000;font-weight:700;font-style:normal;">14:53:27</div>
<div class="t" style="left:1761.0px;top:1492.6px;font-size:27.6px;line-height:27.6px;color:#000;font-weight:700;font-style:normal;">320x320 16 bit</div>
<div style="position:absolute;left:428px;top:1533.8px;width:1947px;height:50px;background:linear-gradient(180deg,#c6c6c6 0%,#dcdcdc 22%,#e4e4e5 50%,#e2e2e3 75%,#cdcdcd 100%)"></div>
<div style="position:absolute;left:428px;top:1533.8px;width:96px;height:51px;background:linear-gradient(180deg,#c2c2c2 0%,#e0e0e0 28%,#eaeaea 50%,#e0e0e0 78%,#c6c6c6 100%);box-shadow:inset 10px 0 10px -6px rgba(0,0,0,0.16)"></div>
<div style="position:absolute;left:426px;top:1533.8px;width:2px;height:50px;background:#d6d6d6"></div>
<div style="position:absolute;left:524px;top:1533.8px;width:4px;height:50px;background:#d2d2d2"></div>
<div style="position:absolute;left:528px;top:1582.6px;width:1847px;height:1.7px;background:#a8a8a8"></div>
<div style="position:absolute;left:426px;top:1584.6px;width:102px;height:1.7px;background:#adadad"></div>
<div class="t" style="left:440.0px;top:1544.7px;font-size:27.3px;line-height:27.3px;color:#2a2a2a;font-weight:400;font-style:normal;">8.</div>
<svg style="position:absolute;left:500.5px;top:1544.8px;" width="9" height="32.2" viewBox="0 0 9 32.2"><circle cx="4.5" cy="4.5" r="4.0" fill="#000"/><circle cx="4.5" cy="16.1" r="4.0" fill="#000"/><circle cx="4.5" cy="27.7" r="4.0" fill="#000"/></svg>
<svg style="position:absolute;left:527px;top:1542.3px;" width="27.8" height="25.4" viewBox="0 0 27.8 25.4"><rect x="0" y="0.00" width="6.67" height="7.17" rx="1.3" fill="#000"/><rect x="9.17" y="0.00" width="18.63" height="7.17" rx="1.3" fill="#000"/><rect x="0" y="9.12" width="6.67" height="7.17" rx="1.3" fill="#000"/><rect x="9.17" y="9.12" width="18.63" height="7.17" rx="1.3" fill="#000"/><rect x="0" y="18.23" width="6.67" height="7.17" rx="1.3" fill="#000"/><rect x="9.17" y="18.23" width="18.63" height="7.17" rx="1.3" fill="#000"/></svg>
<svg style="position:absolute;left:560.2px;top:1542.3px;" width="27.8" height="25.4" viewBox="0 0 27.8 25.4"><circle cx="2.4" cy="2.10" r="2.4" fill="#000"/><rect x="7.37" y="0.00" width="20.43" height="4.2" rx="1.5" fill="#000"/><circle cx="2.4" cy="9.17" r="2.4" fill="#000"/><rect x="7.37" y="7.07" width="20.43" height="4.2" rx="1.5" fill="#000"/><circle cx="2.4" cy="16.23" r="2.4" fill="#000"/><rect x="7.37" y="14.13" width="20.43" height="4.2" rx="1.5" fill="#000"/><circle cx="2.4" cy="23.30" r="2.4" fill="#000"/><rect x="7.37" y="21.20" width="20.43" height="4.2" rx="1.5" fill="#000"/></svg>
<div class="t" style="left:613.5px;top:1542.6px;font-size:27.6px;line-height:27.6px;color:#000;font-weight:700;font-style:normal;">1.2.840.10008.5.1.4.1.1.4</div>
<div class="t" style="left:958.0px;top:1542.6px;font-size:27.6px;line-height:27.6px;color:#000;font-weight:700;font-style:normal;">8</div>
<div class="t" style="left:1224.7px;top:1542.6px;font-size:27.6px;line-height:27.6px;color:#000;font-weight:700;font-style:normal;">2011-10-21</div>
<div class="t" style="left:1493.0px;top:1542.6px;font-size:27.6px;line-height:27.6px;color:#000;font-weight:700;font-style:normal;">14:53:27</div>
<div class="t" style="left:1761.0px;top:1542.6px;font-size:27.6px;line-height:27.6px;color:#000;font-weight:700;font-style:normal;">320x320 16 bit</div>
<div style="position:absolute;left:428px;top:1583.8px;width:1947px;height:50px;background:linear-gradient(180deg,#c6c6c6 0%,#dcdcdc 22%,#e4e4e5 50%,#e2e2e3 75%,#cdcdcd 100%)"></div>
<div style="position:absolute;left:428px;top:1583.8px;width:96px;height:51px;background:linear-gradient(180deg,#c2c2c2 0%,#e0e0e0 28%,#eaeaea 50%,#e0e0e0 78%,#c6c6c6 100%);box-shadow:inset 10px 0 10px -6px rgba(0,0,0,0.16)"></div>
<div style="position:absolute;left:426px;top:1583.8px;width:2px;height:50px;background:#d6d6d6"></div>
<div style="position:absolute;left:524px;top:1583.8px;width:4px;height:50px;background:#d2d2d2"></div>
<div style="position:absolute;left:528px;top:1632.6px;width:1847px;height:1.7px;background:#a8a8a8"></div>
<div style="position:absolute;left:426px;top:1634.6px;width:102px;height:1.7px;background:#adadad"></div>
<div class="t" style="left:440.0px;top:1594.7px;font-size:27.3px;line-height:27.3px;color:#2a2a2a;font-weight:400;font-style:normal;">9.</div>
<svg style="position:absolute;left:500.5px;top:1594.8px;" width="9" height="32.2" viewBox="0 0 9 32.2"><circle cx="4.5" cy="4.5" r="4.0" fill="#000"/><circle cx="4.5" cy="16.1" r="4.0" fill="#000"/><circle cx="4.5" cy="27.7" r="4.0" fill="#000"/></svg>
<svg style="position:absolute;left:527px;top:1592.3px;" width="27.8" height="25.4" viewBox="0 0 27.8 25.4"><rect x="0" y="0.00" width="6.67" height="7.17" rx="1.3" fill="#000"/><rect x="9.17" y="0.00" width="18.63" height="7.17" rx="1.3" fill="#000"/><rect x="0" y="9.12" width="6.67" height="7.17" rx="1.3" fill="#000"/><rect x="9.17" y="9.12" width="18.63" height="7.17" rx="1.3" fill="#000"/><rect x="0" y="18.23" width="6.67" height="7.17" rx="1.3" fill="#000"/><rect x="9.17" y="18.23" width="18.63" height="7.17" rx="1.3" fill="#000"/></svg>
<svg style="position:absolute;left:560.2px;top:1592.3px;" width="27.8" height="25.4" viewBox="0 0 27.8 25.4"><circle cx="2.4" cy="2.10" r="2.4" fill="#000"/><rect x="7.37" y="0.00" width="20.43" height="4.2" rx="1.5" fill="#000"/><circle cx="2.4" cy="9.17" r="2.4" fill="#000"/><rect x="7.37" y="7.07" width="20.43" height="4.2" rx="1.5" fill="#000"/><circle cx="2.4" cy="16.23" r="2.4" fill="#000"/><rect x="7.37" y="14.13" width="20.43" height="4.2" rx="1.5" fill="#000"/><circle cx="2.4" cy="23.30" r="2.4" fill="#000"/><rect x="7.37" y="21.20" width="20.43" height="4.2" rx="1.5" fill="#000"/></svg>
<div class="t" style="left:613.5px;top:1592.6px;font-size:27.6px;line-height:27.6px;color:#000;font-weight:700;font-style:normal;">1.2.840.10008.5.1.4.1.1.4</div>
<div class="t" style="left:958.0px;top:1592.6px;font-size:27.6px;line-height:27.6px;color:#000;font-weight:700;font-style:normal;">9</div>
<div class="t" style="left:1224.7px;top:1592.6px;font-size:27.6px;line-height:27.6px;color:#000;font-weight:700;font-style:normal;">2011-10-21</div>
<div class="t" style="left:1493.0px;top:1592.6px;font-size:27.6px;line-height:27.6px;color:#000;font-weight:700;font-style:normal;">14:53:27</div>
<div class="t" style="left:1761.0px;top:1592.6px;font-size:27.6px;line-height:27.6px;color:#000;font-weight:700;font-style:normal;">320x320 16 bit</div>
<div style="position:absolute;left:150px;top:826px;width:2222px;height:357px;overflow:hidden;mix-blend-mode:multiply;pointer-events:none"><div style="position:absolute;left:985px;top:-20px;width:250px;height:400px;background:rgba(205,208,245,0.3);filter:blur(16px)"></div><div style="position:absolute;left:1160px;top:160px;width:230px;height:60px;background:rgba(252,240,225,0.5);filter:blur(16px)"></div><div style="position:absolute;left:1470px;top:0px;width:700px;height:150px;background:rgba(238,238,238,0.22);filter:blur(22px)"></div></div>
<svg style="position:absolute;left:2150px;top:1580px;" width="252" height="46" viewBox="0 0 252 46"><g opacity="0.35"><circle cx="53" cy="43" r="38" fill="#a9b4bf"/><path d="M20,30 Q53,10 88,38 M30,18 Q60,40 70,82 M50,6 Q30,40 40,82 M75,12 Q50,30 22,60" fill="none" stroke="#e8eef2" stroke-width="2"/><rect x="118" y="25" width="11" height="30" fill="#b8c3cc"/><rect x="135" y="25" width="11" height="30" fill="#b8c3cc"/><rect x="129" y="36" width="6" height="9" fill="#b8c3cc"/><path d="M205,30 Q170,22 165,46 L165,60 L178,60 L178,46 Q182,34 205,40 Z" fill="#b8c3cc"/><path d="M252,28 Q220,22 215,46 L215,60 L228,60 L228,46 Q232,34 252,40 Z" fill="#b8c3cc"/></g></svg>
<div style="position:absolute;left:2340px;top:1034px;width:32px;height:592px;background:linear-gradient(90deg,rgba(0,0,0,0),rgba(0,0,0,0.05) 50%,rgba(0,0,0,0.16))"></div>
<div style="position:absolute;left:2371px;top:1034px;width:4px;height:592px;background:#c2c2c2"></div>
<div style="position:absolute;left:2375px;top:1040px;width:27px;height:150px;background:radial-gradient(ellipse at left center,rgba(150,155,175,0.3),rgba(150,155,175,0) 70%)"></div>
<div style="position:absolute;left:148px;top:826px;width:2228px;height:26px;background:linear-gradient(180deg,rgba(0,0,0,0.42) 0%,rgba(0,0,0,0.18) 35%,rgba(0,0,0,0.05) 70%,rgba(0,0,0,0) 100%)"></div>
<div style="position:absolute;left:148px;top:764px;width:2228px;height:60px;background:#676767"></div>
<div style="position:absolute;left:148px;top:824px;width:2228px;height:2px;background:#fafafa"></div>
<div style="position:absolute;left:739px;top:764px;width:2px;height:60px;background:#d0d0d0"></div>
<div style="position:absolute;left:971px;top:764px;width:2px;height:60px;background:#d0d0d0"></div>
<div style="position:absolute;left:1202px;top:764px;width:2px;height:60px;background:#d0d0d0"></div>
<div style="position:absolute;left:1431px;top:764px;width:2px;height:60px;background:#d0d0d0"></div>
<div style="position:absolute;left:1664px;top:764px;width:2px;height:60px;background:#d0d0d0"></div>
<div style="position:absolute;left:1894px;top:764px;width:2px;height:60px;background:#d0d0d0"></div>
<div style="position:absolute;left:2334px;top:764px;width:2px;height:60px;background:#d0d0d0"></div>
<div style="position:absolute;left:206px;top:770px;width:188px;height:48px;border:2px solid #fff;box-sizing:border-box"></div>
<svg style="position:absolute;left:160px;top:784px;" width="38" height="28" viewBox="0 0 38 28"><rect x="2" y="3.3" width="19" height="3.4" fill="#ddd"/><rect x="2" y="10" width="19" height="3.2" fill="#ddd"/><rect x="2" y="16.2" width="13" height="3.4" fill="#ddd"/><path d="M19,19 L24.5,24.5 L34.5,14" fill="none" stroke="#ddd" stroke-width="3.3"/></svg>
<svg style="position:absolute;left:210px;top:777px;" width="36" height="40" viewBox="0 0 36 40"><path d="M3.5,28 L3.5,4 L24,4" fill="none" stroke="#ddd" stroke-width="3.2"/><rect x="10" y="10.5" width="21" height="26" rx="2.5" fill="none" stroke="#ddd" stroke-width="3.2"/></svg>
<svg style="position:absolute;left:257px;top:779px;" width="38" height="38" viewBox="0 0 38 38"><circle cx="8.9" cy="8.2" r="4.5" fill="none" stroke="#ddd" stroke-width="3.3"/><circle cx="8.9" cy="27.3" r="4.5" fill="none" stroke="#ddd" stroke-width="3.3"/><path d="M10.8,11.2 L13.4,9 L34.8,31.9 L29.2,31.9 Z" fill="#ddd"/><path d="M20.2,13.6 L29.6,4 L34.4,4 L23.4,15.9 Z" fill="#ddd"/><path d="M11.8,24.5 L19.8,17.2" stroke="#ddd" stroke-width="3.4"/><circle cx="18.7" cy="18.2" r="0.9" fill="#777"/></svg>
<svg style="position:absolute;left:305px;top:784px;" width="38" height="28" viewBox="0 0 38 28"><circle cx="14.5" cy="7" r="5.3" fill="#ddd"/><circle cx="25" cy="9.6" r="4.2" fill="#ddd"/><path d="M2,24 Q2,15.5 13,15.5 Q16,15.5 18,16.5 Q13.5,18.5 13.5,24 Z" fill="#ddd"/><path d="M15.5,24 Q15.5,17 25,17 Q34.5,17 34.5,24 Z" fill="#ddd"/></svg>
<svg style="position:absolute;left:354px;top:776px;" width="34" height="40" viewBox="0 0 34 40"><rect x="4.5" y="6.5" width="25" height="29.5" rx="2.5" fill="none" stroke="#ddd" stroke-width="3"/><path d="M9.5,6 L24.5,6 L24.5,13 L9.5,13 Z" fill="#ddd"/><circle cx="17" cy="5.5" r="4.3" fill="#ddd"/><circle cx="17" cy="5.3" r="1.5" fill="#676767"/></svg>
<div class="t" style="left:527.4px;top:781.0px;font-size:27.75px;line-height:27.75px;color:#f0f0f0;font-weight:400;font-style:normal;">Station Name</div>
<div class="t" style="left:757.8px;top:781.0px;font-size:27.75px;line-height:27.75px;color:#f0f0f0;font-weight:400;font-style:normal;">Series Number</div>
<div class="t" style="left:988.0px;top:781.0px;font-size:27.75px;line-height:27.75px;color:#f0f0f0;font-weight:400;font-style:normal;">PPS Start Date</div>
<div class="t" style="left:1218.5px;top:781.0px;font-size:27.75px;line-height:27.75px;color:#f0f0f0;font-weight:400;font-style:normal;">PPS Start Time</div>
<div class="t" style="left:1448.6px;top:781.0px;font-size:27.75px;line-height:27.75px;color:#f0f0f0;font-weight:400;font-style:normal;">Body Part</div>
<div class="t" style="left:1679.7px;top:781.0px;font-size:27.75px;line-height:27.75px;color:#f0f0f0;font-weight:400;font-style:normal;">Modality</div>
<div class="t" style="left:1910.7px;top:781.0px;font-size:27.75px;line-height:27.75px;color:#f0f0f0;font-weight:400;font-style:normal;">Series Description</div>
<div class="t" style="left:2350.6px;top:781.0px;font-size:27.75px;line-height:27.75px;color:#f0f0f0;font-weight:400;font-style:normal;">#I</div>
<div style="position:absolute;left:36px;top:926px;width:244px;height:52px;background:#fff;box-shadow:12px 8px 22px rgba(0,0,0,0.42);clip-path:inset(0px -70px 0px 0px)"></div>
<div style="position:absolute;left:84px;top:926px;width:196px;height:104px;background:#fff;box-shadow:12px 8px 22px rgba(0,0,0,0.42);clip-path:inset(0px -70px 0px 0px)"></div>
<div style="position:absolute;left:36px;top:926px;width:244px;height:52px;background:#fff"></div>
<svg style="position:absolute;left:56.9px;top:939.1px;" width="8.2" height="29.2" viewBox="0 0 8.2 29.2"><circle cx="4.1" cy="4.1" r="3.6" fill="#000"/><circle cx="4.1" cy="14.6" r="3.6" fill="#000"/><circle cx="4.1" cy="25.1" r="3.6" fill="#000"/></svg>
<div style="position:absolute;left:114.5px;top:946px;width:27px;height:27.5px;border:1.5px solid #c4c4c4;border-radius:5px;box-sizing:border-box;background:#fff"></div>
<svg style="position:absolute;left:165px;top:937px;" width="31" height="31" viewBox="0 0 31 31"><path d="M2,28.5 L4.5,21 L8.8,25.4 Z" fill="#000"/><path d="M6,19.5 L21.5,4 L26,8.5 L10.5,24 Z" fill="#000"/><path d="M23,2.5 L25,0.6 Q26,0 27,0.8 L29.5,3.3 Q30.3,4.2 29.5,5 L27.5,7 Z" fill="#000"/></svg>
<svg style="position:absolute;left:218.5px;top:940px;" width="27" height="27" viewBox="0 0 27 27"><rect x="9.7" y="0" width="7" height="26" rx="1.2" fill="#000"/><rect x="0" y="9.6" width="26" height="7.2" rx="1.2" fill="#000"/></svg>
<svg style="position:absolute;left:112px;top:991px;" width="33" height="26" viewBox="0 0 33 26"><path d="M3.5,12.5 C8,0 25,0 29.5,12.5 C25,25 8,25 3.5,12.5 Z" fill="none" stroke="#000" stroke-width="3.3" stroke-linejoin="round"/><circle cx="16.5" cy="12.8" r="6.8" fill="#000"/><path d="M12.2,15 Q11.8,10.5 15.5,8.8" stroke="#fff" stroke-width="2" fill="none" stroke-linecap="round"/></svg>
</body></html>
